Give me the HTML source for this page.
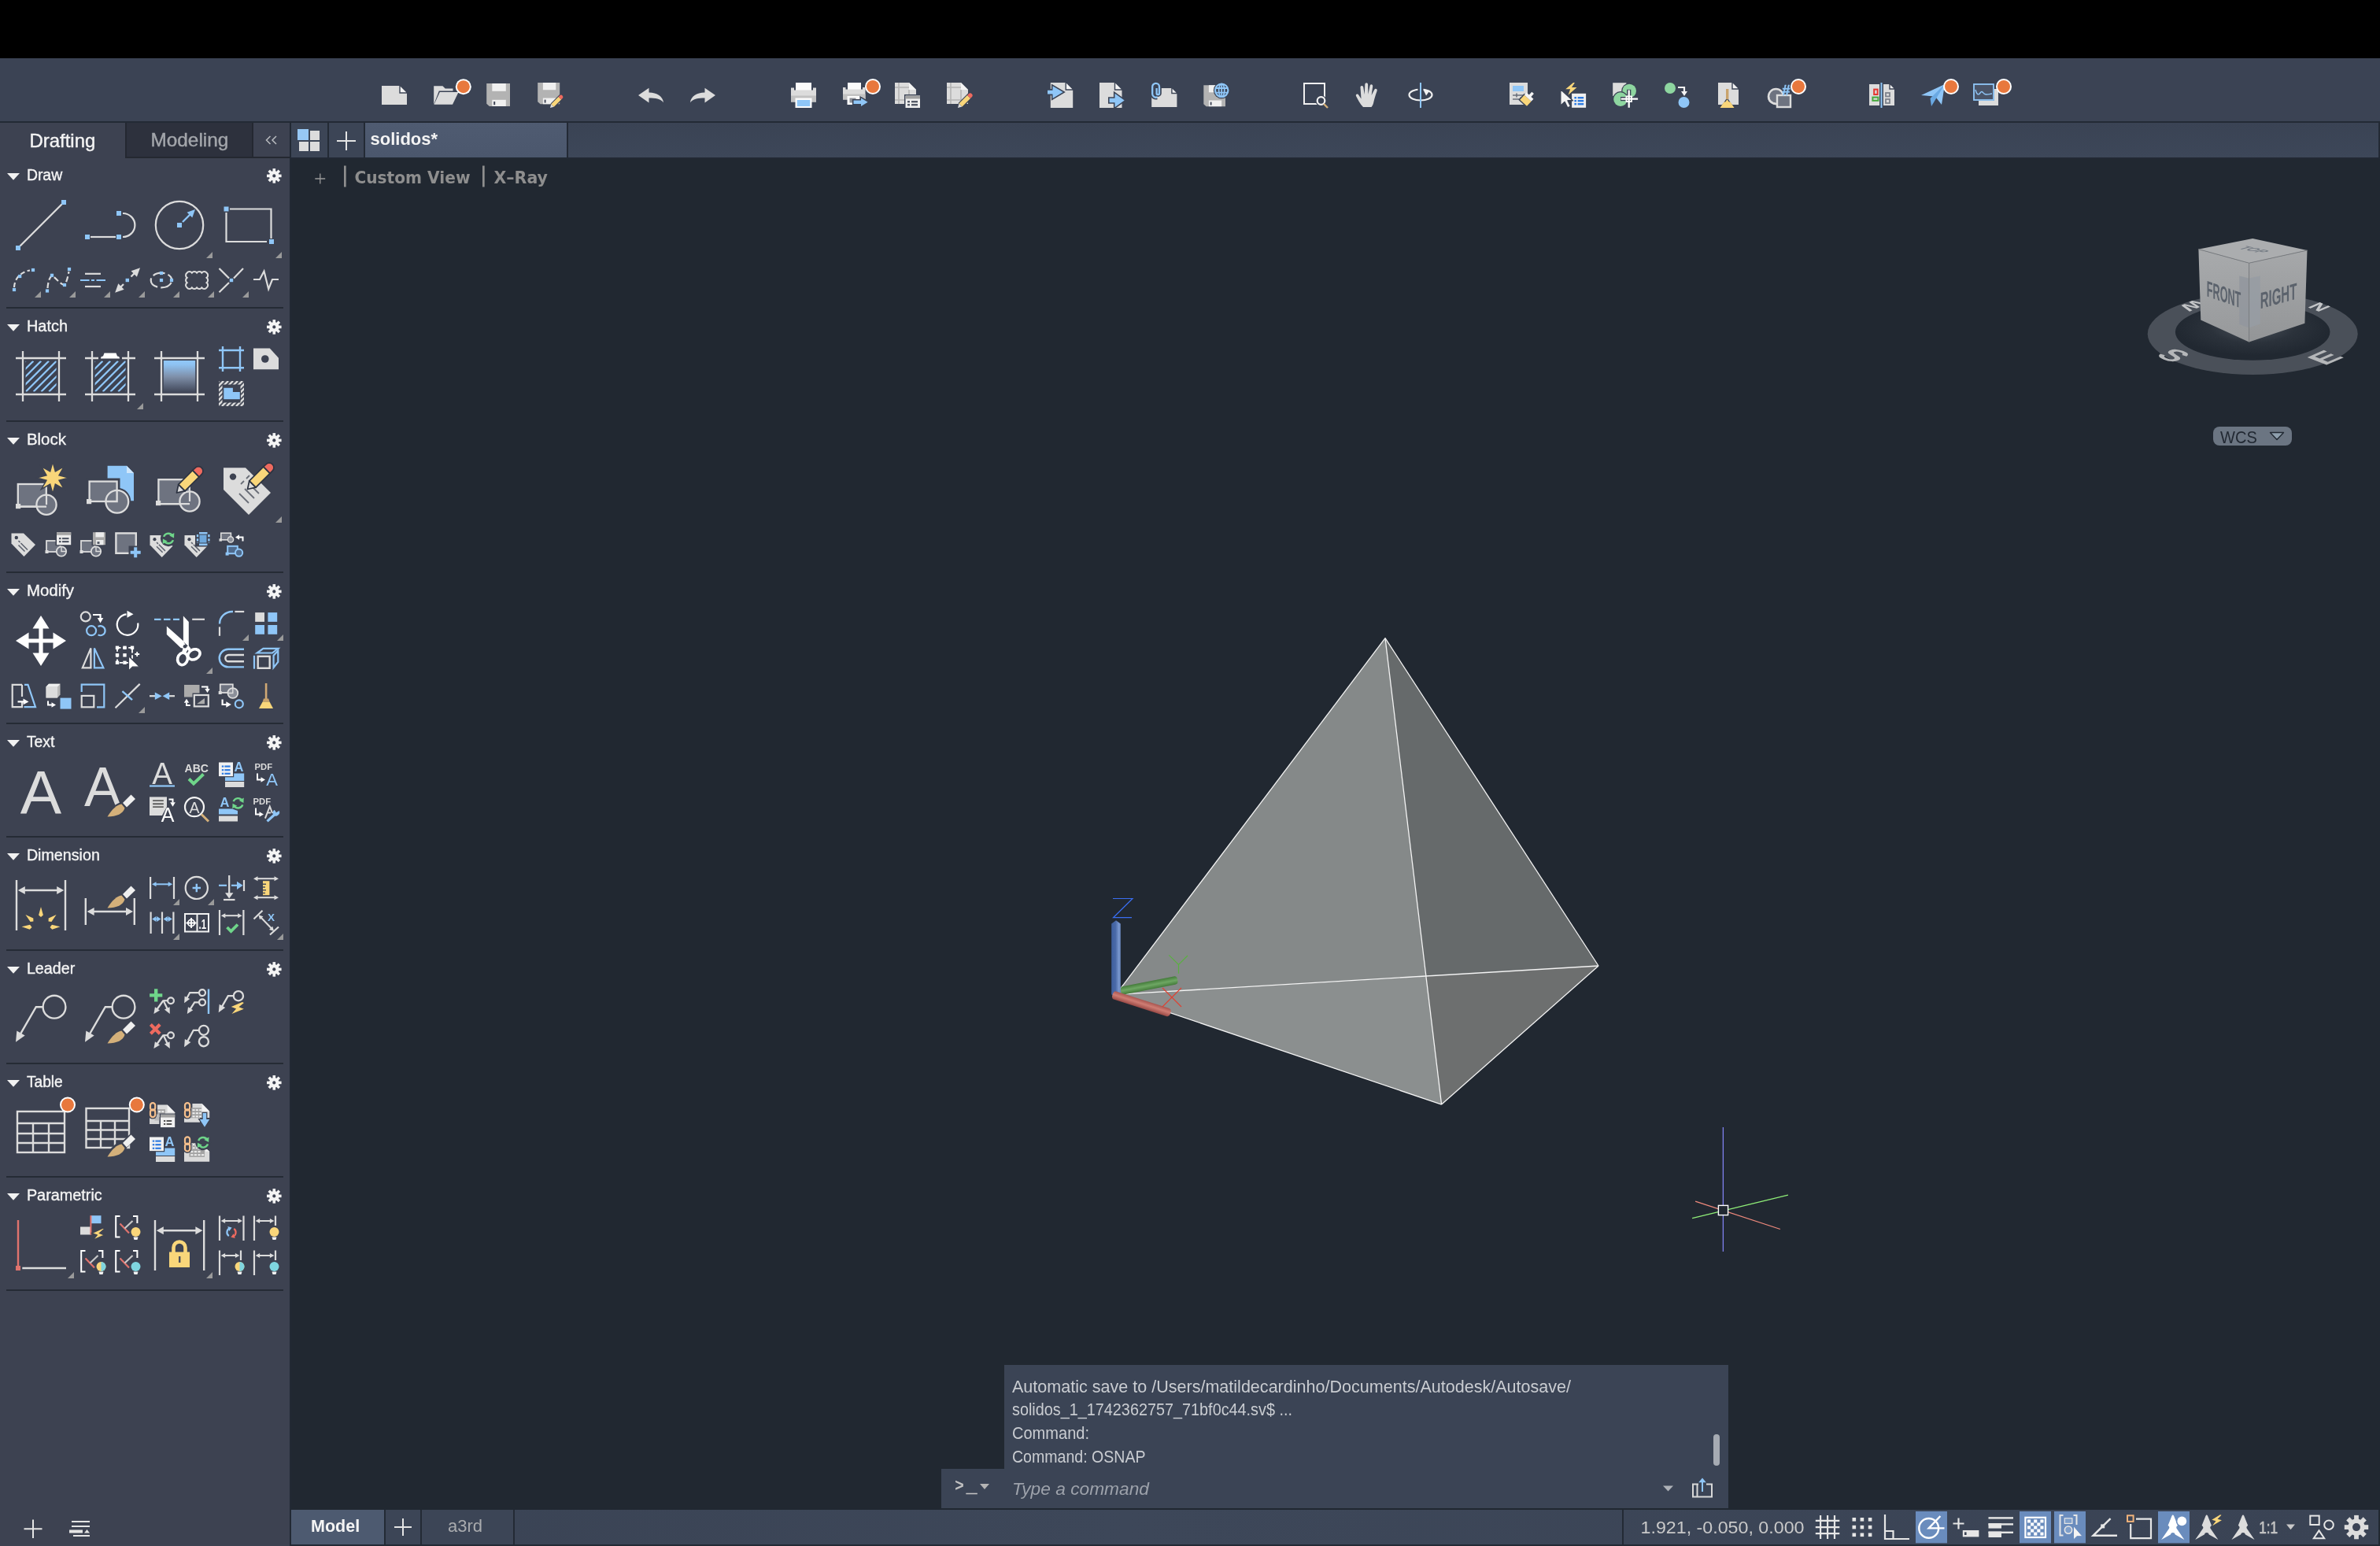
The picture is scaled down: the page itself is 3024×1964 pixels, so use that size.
<!DOCTYPE html><html lang="en"><head><meta charset="utf-8"><title>AutoCAD - solidos</title><style>
html,body{margin:0;padding:0;background:#212831;}
body{width:3024px;height:1964px;position:relative;overflow:hidden;font-family:"Liberation Sans",sans-serif;}
.abs{position:absolute;}
#menubar{left:0;top:0;width:3024px;height:74px;background:#000;}
#toolbar{left:0;top:74px;width:3024px;height:80px;background:#3b4354;}
#tbline{left:0;top:154px;width:3024px;height:2px;background:#232a35;}
#panel{left:0;top:156px;width:368px;height:1808px;background:#3d4251;}
#pedge{left:368px;top:156px;width:2px;height:1808px;background:#222934;}
#tabrow{left:370px;top:156px;width:2652px;height:44px;background:linear-gradient(#3a4354,#3d4759);}
#tabrow2{left:370px;top:200px;width:2654px;height:2px;background:#222934;}
.tbtn{top:156px;height:44px;background:#3c4556;}
#doctab{left:464px;top:156px;width:256px;height:44px;background:linear-gradient(#4f5b71,#4b576d);}
.vsep{top:156px;width:2px;height:44px;background:#232a35;}
#ptab2{left:159px;top:156px;width:162px;height:45px;background:#2d313d;border:solid #242831;border-width:0 1px 2px 2px;box-sizing:border-box;}
#pcol{left:321px;top:156px;width:47px;height:45px;background:#3d4251;border-bottom:2px solid #242831;border-left:1px solid #242831;box-sizing:border-box;}
#canvas{left:370px;top:202px;width:2654px;height:1716px;background:#212831;}
#botbar{left:370px;top:1918px;width:2652px;height:44px;background:linear-gradient(90deg,#3a4354,#3d4759 40%,#3a4354);}
#botline{left:370px;top:1962px;width:2654px;height:2px;background:#232a35;}
#mtab{left:370px;top:1918px;width:118px;height:44px;background:#4d5a70;}
#ptab{left:490px;top:1918px;width:44px;height:44px;background:#3c4556;}
#atab{left:536px;top:1918px;width:116px;height:44px;background:#3c4556;}
.bsep{top:1918px;width:2px;height:44px;background:#232a35;}
#cmdhist{left:1276px;top:1734px;width:920px;height:133px;background:#3b4455;}
#cmdin{left:1196px;top:1866px;width:1000px;height:50px;background:#3b4455;}
#cmdscroll{left:2177px;top:1822px;width:8px;height:40px;border-radius:4px;background:#a6abb3;}
svg{position:absolute;left:0;top:0;overflow:visible;will-change:transform;}
svg text{white-space:pre;}
</style></head><body>
<div id="menubar" class="abs"></div>
<div id="toolbar" class="abs"></div><div id="tbline" class="abs"></div>
<div id="canvas" class="abs"></div>
<div id="panel" class="abs"></div><div id="pedge" class="abs"></div>
<div id="ptab2" class="abs"></div><div id="pcol" class="abs"></div>
<div id="tabrow" class="abs"></div><div id="tabrow2" class="abs"></div>
<div class="abs tbtn" style="left:370px;width:46px"></div><div class="abs vsep" style="left:416px"></div>
<div class="abs tbtn" style="left:418px;width:44px"></div><div class="abs vsep" style="left:462px"></div>
<div id="doctab" class="abs"></div><div class="abs vsep" style="left:720px"></div>
<div class="abs" style="left:3022px;top:156px;width:2px;height:44px;background:#232a35"></div>
<div id="botbar" class="abs"></div><div id="botline" class="abs"></div>
<div id="mtab" class="abs"></div><div class="abs bsep" style="left:488px"></div>
<div id="ptab" class="abs"></div><div class="abs bsep" style="left:534px"></div>
<div id="atab" class="abs"></div><div class="abs bsep" style="left:652px"></div>
<div class="abs bsep" style="left:2061px"></div>
<div id="cmdhist" class="abs"></div><div id="cmdin" class="abs"></div><div id="cmdscroll" class="abs"></div>
<svg width="3024" height="1964" viewBox="0 0 3024 1964">
<polygon points="1760,810.7 1418,1263.4 1812.1,1240.4" fill="#858989"/>
<polygon points="1760,810.7 1812.1,1240.4 2031,1227" fill="#666a6b"/>
<polygon points="1418,1263.4 1831.6,1403.1 1812.1,1240.4" fill="#8b8f8f"/>
<polygon points="1812.1,1240.4 1831.6,1403.1 2031,1227" fill="#6d6f6f"/>
<path d="M1760 810.7L1418 1263.4" stroke="#f4f4f4" stroke-width="1.3" fill="none"/>
<path d="M1760 810.7L1831.6 1403.1" stroke="#f4f4f4" stroke-width="1.3" fill="none"/>
<path d="M1760 810.7L2031 1227" stroke="#f4f4f4" stroke-width="1.3" fill="none"/>
<path d="M1418 1263.4L1831.6 1403.1" stroke="#f4f4f4" stroke-width="1.3" fill="none"/>
<path d="M1831.6 1403.1L2031 1227" stroke="#f4f4f4" stroke-width="1.3" fill="none"/>
<path d="M1418 1263.4L2031 1227" stroke="#f4f4f4" stroke-width="1.3" fill="none"/>
<defs><linearGradient id="gz" x1="0" x2="1" y1="0" y2="0"><stop offset="0" stop-color="#3f5f9e"/><stop offset=".45" stop-color="#4a6aa8"/><stop offset=".8" stop-color="#7896cd"/><stop offset="1" stop-color="#6a88c0"/></linearGradient><linearGradient id="gy" x1="0" x2="0" y1="0" y2="1"><stop offset="0" stop-color="#437a3a"/><stop offset=".5" stop-color="#6ea763"/><stop offset="1" stop-color="#437a3a"/></linearGradient><linearGradient id="gx" x1="0" x2="0" y1="0" y2="1"><stop offset="0" stop-color="#a85650"/><stop offset=".45" stop-color="#cf7d74"/><stop offset="1" stop-color="#9a4a46"/></linearGradient></defs>
<path d="M1414 1141.5H1439L1414.5 1165.7H1438" stroke="#3a6ef0" stroke-width="1.2" fill="none"/>
<path d="M1412.2 1173.5L1418 1169.3L1423.8 1173.5V1262.5A5.8 3 0 0 1 1412.2 1262.5Z" fill="url(#gz)"/>
<g transform="translate(1424.2,1258.9) rotate(-11.07)"><rect x="0" y="-5.3" width="73.31" height="10.6" rx="4" fill="url(#gy)"/></g>
<g transform="translate(1414.6,1263.8) rotate(17.8)"><rect x="-1" y="-5.3" width="77.25" height="10.6" rx="4" fill="url(#gx)"/></g>
<path d="M1485.3 1213.4L1497.5 1225.5L1509 1214M1497.5 1225.5V1236.8" stroke="#5ab040" stroke-width="1.2" fill="none"/>
<path d="M1477 1255L1501 1279M1501 1255L1477 1279" stroke="#e04030" stroke-width="1.2" fill="none"/>
<path d="M2189.4 1432V1590" stroke="#8080f0" stroke-width="1.3"/>
<path d="M2150.1 1547.7L2271.9 1518.1" stroke="#8fee78" stroke-width="1.3"/>
<path d="M2154.1 1526.1L2261.9 1561.5" stroke="#f08a7c" stroke-width="1.3"/>
<rect x="2183.4" y="1531.4" width="12.2" height="12.2" fill="#212831" stroke="#fff" stroke-width="1.4"/>
<defs><linearGradient id="cf" x1="0" x2="0" y1="0" y2="1"><stop offset="0" stop-color="#a8aaac"/><stop offset="1" stop-color="#97999b"/></linearGradient><linearGradient id="cr" x1="0" x2="0" y1="0" y2="1"><stop offset="0" stop-color="#a6a8aa"/><stop offset="1" stop-color="#939597"/></linearGradient><radialGradient id="sh" cx=".5" cy=".42" r=".5"><stop offset="0" stop-color="#4b525b"/><stop offset=".55" stop-color="#2b323b"/><stop offset="1" stop-color="#212831"/></radialGradient></defs>
<ellipse cx="2862.2" cy="424.2" rx="133.5" ry="51.7" fill="#4a5059"/>
<ellipse cx="2862.2" cy="421.7" rx="98.3" ry="36" fill="url(#sh)"/>
<g transform="matrix(1.26,0.5,-1.21,0.52,2737.5,451.7)"><text x="0" y="0" font-family="'Liberation Sans',sans-serif" font-weight="700" font-size="29" fill="#b5b7b9">S</text></g>
<g transform="matrix(1.29,-0.56,1.18,0.47,2953.5,464.7)"><text x="0" y="0" font-family="'Liberation Sans',sans-serif" font-weight="700" font-size="30" fill="#b5b7b9">E</text></g>
<g transform="matrix(-0.76,-0.3,0.72,-0.31,2962.4,390)"><text x="0" y="0" font-family="'Liberation Sans',sans-serif" font-weight="700" font-size="30" fill="#c4c6c8">N</text></g>
<g transform="matrix(-0.78,0.34,-0.71,-0.28,2789.4,380.3)"><text x="0" y="0" font-family="'Liberation Sans',sans-serif" font-weight="700" font-size="30" fill="#c4c6c8">W</text></g>
<polygon points="2793.4,316.6 2862.2,303.1 2931.5,318 2857.6,334.2" fill="#abadaf"/>
<polygon points="2793.4,316.6 2857.6,334.2 2857.6,434.6 2796.3,406.6" fill="url(#cf)"/>
<polygon points="2857.6,334.2 2931.5,318 2928.4,410.8 2857.6,434.6" fill="url(#cr)"/>
<polygon points="2845.2,350.5 2857.6,353.5 2857.6,416.5 2845.2,412" fill="#92979e" opacity=".85"/>
<polygon points="2857.6,353.5 2871.8,350.5 2871.8,411.5 2857.6,416.5" fill="#979ca3" opacity=".85"/>
<path d="M2793.4 316.6L2857.6 334.2L2931.5 318M2857.6 334.2V434.6" stroke="#7b7e82" stroke-width="1" fill="none"/>
<g transform="matrix(1,0.35,0,1,2803.8,376.2)"><text x="0" y="0" font-family="'Liberation Sans',sans-serif" font-weight="700" font-size="28.5" fill="#5b626c" textLength="43.5" lengthAdjust="spacingAndGlyphs">FRONT</text></g>
<g transform="matrix(1,-0.27,0,1,2871.8,392.2)"><text x="0" y="0" font-family="'Liberation Sans',sans-serif" font-weight="700" font-size="29" fill="#5b626c" textLength="46.5" lengthAdjust="spacingAndGlyphs">RIGHT</text></g>
<g transform="matrix(0.95,0.2,-1.1,0.28,2843,315.5)"><text x="0" y="0" font-family="'Liberation Sans',sans-serif" font-weight="700" font-size="15.5" fill="#747b84">TOP</text></g>
<rect x="2812" y="542" width="100" height="24" rx="8" fill="#6b7582"/>
<text x="2821" y="563" font-family="'Liberation Sans',sans-serif" font-size="22.5" font-weight="400" fill="#222933" text-anchor="start" textLength="46.8" lengthAdjust="spacingAndGlyphs">WCS</text>
<path d="M2884.5 549.5H2901.5L2893 558.5Z" fill="#8fa0ae" stroke="#222933" stroke-width="1.4" stroke-linejoin="round"/>
<rect x="378" y="164" width="14" height="14" fill="#97c8f5" /><rect x="394" y="166" width="12" height="12" fill="#dcdcdc" /><rect x="380" y="180" width="12" height="12" fill="#dcdcdc" /><rect x="394" y="180" width="12" height="12" fill="#dcdcdc" />
<path d="M440 167V191M428 179H452" stroke="#e4e4e4" stroke-width="2"/>
<text x="470.5" y="183.6" font-family="'Liberation Sans',sans-serif" font-size="22" font-weight="700" fill="#f4f4f4" text-anchor="start" >solidos*</text>
<text x="37.5" y="187" font-family="'Liberation Sans',sans-serif" font-size="24" font-weight="400" fill="#f4f4f4" text-anchor="start" stroke="#f4f4f4" stroke-width="0.4" textLength="83.8" lengthAdjust="spacingAndGlyphs">Drafting</text>
<text x="191.5" y="186" font-family="'Liberation Sans',sans-serif" font-size="24" font-weight="400" fill="#a3a6ab" text-anchor="start" stroke="#a3a6ab" stroke-width="0.4" textLength="98.8" lengthAdjust="spacingAndGlyphs">Modeling</text>
<path d="M343.5 173L338.5 178L343.5 183M351 173L346 178L351 183" stroke="#b9bbbf" stroke-width="1.5" fill="none"/>
<path d="M406.8 220.6V233.5M400.3 227H413.2" stroke="#9a9a9a" stroke-width="1.3"/>
<rect x="437" y="210.5" width="2.7" height="27" fill="#8e8e8e" /><rect x="613" y="210.5" width="2.7" height="27" fill="#8e8e8e" />
<text x="450.5" y="233.2" font-family="'DejaVu Sans',sans-serif" font-size="20.4" font-weight="700" fill="#8e8e8e" text-anchor="start" textLength="147" lengthAdjust="spacingAndGlyphs">Custom View</text>
<text x="627.5" y="233.2" font-family="'DejaVu Sans',sans-serif" font-size="20.4" font-weight="700" fill="#8e8e8e" text-anchor="start" textLength="68.5" lengthAdjust="spacingAndGlyphs">X–Ray</text>
<text x="395" y="1946" font-family="'Liberation Sans',sans-serif" font-size="21.5" font-weight="700" fill="#f4f4f4" text-anchor="start" >Model</text>
<path d="M512 1929V1951M501 1940H523" stroke="#e4e4e4" stroke-width="2"/>
<text x="569" y="1946" font-family="'Liberation Sans',sans-serif" font-size="22" font-weight="400" fill="#a9abae" text-anchor="start" >a3rd</text>
<text x="1286" y="1768.5" font-family="'Liberation Sans',sans-serif" font-size="21.5" font-weight="400" fill="#c9ccd1" text-anchor="start" textLength="710" lengthAdjust="spacingAndGlyphs">Automatic save to /Users/matildecardinho/Documents/Autodesk/Autosave/</text>
<text x="1286" y="1798.3" font-family="'Liberation Sans',sans-serif" font-size="21.5" font-weight="400" fill="#c9ccd1" text-anchor="start" textLength="356" lengthAdjust="spacingAndGlyphs">solidos_1_1742362757_71bf0c44.sv$ ...</text>
<text x="1286" y="1828.2" font-family="'Liberation Sans',sans-serif" font-size="21.5" font-weight="400" fill="#c9ccd1" text-anchor="start" textLength="98" lengthAdjust="spacingAndGlyphs">Command:</text>
<text x="1286" y="1858" font-family="'Liberation Sans',sans-serif" font-size="21.5" font-weight="400" fill="#c9ccd1" text-anchor="start" textLength="169.5" lengthAdjust="spacingAndGlyphs">Command: OSNAP</text>
<text x="1286" y="1898.5" font-family="'Liberation Sans',sans-serif" font-size="22.5" font-weight="400" fill="#9da2ab" text-anchor="start" font-style="italic" textLength="174" lengthAdjust="spacingAndGlyphs">Type a command</text>
<text x="1213.2" y="1893.8" font-family="'Liberation Sans',sans-serif" font-size="22" font-weight="700" fill="#c2c2c2" text-anchor="start" textLength="11.4" lengthAdjust="spacingAndGlyphs">&gt;</text>
<text x="1227.9" y="1895.4" font-family="'Liberation Sans',sans-serif" font-size="22" font-weight="700" fill="#c2c2c2" text-anchor="start" stroke="#c2c2c2" stroke-width="0.7" textLength="13.2" lengthAdjust="spacingAndGlyphs">_</text>
<path d="M1245 1885H1257L1251 1892Z" fill="#b4b4b4"/>
<path d="M2113 1887.5H2126L2119.5 1894.5Z" fill="#aeb2b8"/>
<path d="M2158 1885.5H2151V1901.5H2175V1885.5H2168M2156.5 1885.5V1901.5" stroke="#d8d8d8" stroke-width="2" fill="none"/><path d="M2163 1895V1880" stroke="#8fc6f7" stroke-width="2"/><path d="M2158.2 1883.2L2163 1877.4L2167.8 1883.2Z" fill="#8fc6f7"/>
<g transform="translate(485,105)" ><path d="M0 4H23L32 13V28H0Z" fill="#dcdcdc" /><path d="M23 3V13H33Z" fill="#f4f4f4" stroke="#3b4354" stroke-width="1.4" stroke-linejoin="miter"/></g>
<g transform="translate(551,105)" ><path d="M0.2 27.7V4.2H11.4L14.7 7.5H24.5V10.4H6.8L0.2 27.7Z" fill="#dcdcdc" /><path d="M7.8 12H31.6L24 27.8H0.5Z" fill="#dcdcdc" /><circle cx="37.8" cy="5.2" r="10" fill="#fff"/><circle cx="37.8" cy="5.2" r="8" fill="#e8783d"/></g>
<g transform="translate(617,105)" ><g transform="translate(1.2,1) scale(1)"><path d="M0 0H29.8V29H3.6L0 25.8Z" fill="#b3b3b3" /><rect x="7.1" y="0" width="17.5" height="9.8" fill="#f0f0f0" /><rect x="7.1" y="20.8" width="17.5" height="8.2" fill="#f0f0f0" /><rect x="9" y="23" width="2" height="4.2" fill="#3f4556" /></g></g>
<g transform="translate(683,105)" ><g transform="translate(0.2,0) scale(0.94)"><path d="M0 0H29.8V29H3.6L0 25.8Z" fill="#b3b3b3" /><rect x="7.1" y="0" width="17.5" height="9.8" fill="#f0f0f0" /><rect x="7.1" y="20.8" width="17.5" height="8.2" fill="#f0f0f0" /><rect x="9" y="23" width="2" height="4.2" fill="#3f4556" /></g><g transform="translate(16,32) scale(0.44)"><path d="M-2 3L2 -13L26 -37A8 8 0 0 1 38 -26L13 -1Z" fill="#3b4354"/><path d="M0 0L3 -11L11 -3Z" fill="#dcdcdc"/><path d="M3 -11L24 -32L32 -24L11 -3Z" fill="#f9d67a"/><path d="M24 -32L27.5 -35.5A5.6 5.6 0 0 1 35.5 -27.5L32 -24Z" fill="#ee6a5f"/></g></g>
<g transform="translate(811,105)" ><path d="M0 16L13.5 6.8V12.6C24 12.6 31 17.5 32 25.2C28 20.6 22 19.6 13.5 19.6V25.4Z" fill="#dcdcdc" /></g>
<g transform="translate(877,105)" ><g transform="translate(32,0) scale(-1,1)"><path d="M0 16L13.5 6.8V12.6C24 12.6 31 17.5 32 25.2C28 20.6 22 19.6 13.5 19.6V25.4Z" fill="#dcdcdc" /></g></g>
<g transform="translate(1005,105)" ><rect x="6" y="0" width="20" height="10" fill="#fbfbfb" /><path d="M0 6.5H4V9.5H28V6.5H32V24.5H0Z" fill="#dcdcdc" /><rect x="0" y="16.5" width="32" height="8" fill="#c2c2c2" /><rect x="5.5" y="19.5" width="21" height="12.5" fill="#fbfbfb" /><rect x="7.8" y="22" width="16.4" height="8" fill="#8fc6f7" /></g>
<g transform="translate(1071,105)" ><rect x="6" y="0" width="17" height="9" fill="#fbfbfb" /><path d="M0 6H3.5V8.5H25V6H28.5V21.5H0Z" fill="#dcdcdc" /><rect x="0" y="14.5" width="28.5" height="7" fill="#c2c2c2" /><rect x="5.5" y="17" width="18" height="11" fill="#fbfbfb" /><rect x="8.5" y="19.5" width="8" height="6" fill="#8d9097" /><path d="M13.5 22.6H23V19.55L31.6 24.8L23 30.05V27H13.5Z" fill="#3b4354" stroke="#3b4354" stroke-width="3.2" stroke-linejoin="miter"/><path d="M13.5 22.6H23V19.55L31.6 24.8L23 30.05V27H13.5Z" fill="#8fc6f7" /><circle cx="38" cy="5" r="10" fill="#fff"/><circle cx="38" cy="5" r="8" fill="#e8783d"/></g>
<g transform="translate(1137,105)" ><path d="M0 0H18L27 9V27H0Z" fill="#dcdcdc" /><path d="M18 0V9H27Z" fill="#f4f4f4" /><path d="M5 0V27M18 9V27M0 6H18M0 22H27" stroke="#b4b4b4" stroke-width="1.6" fill="none" /><rect x="12" y="15" width="20" height="17" fill="#3b4354" /><rect x="13.5" y="16.5" width="18.5" height="15.5" fill="#f0f0f0" /><rect x="13.5" y="16.5" width="18.5" height="4" fill="#a0a0a0" /><rect x="16" y="23" width="3" height="2.4" fill="#555b68" /><rect x="21" y="23" width="8" height="2.4" fill="#555b68" /><rect x="16" y="27" width="3" height="2.4" fill="#555b68" /><rect x="21" y="27" width="8" height="2.4" fill="#555b68" /></g>
<g transform="translate(1203,105)" ><path d="M0 0H18L27 9V27H0Z" fill="#dcdcdc" /><path d="M18 0V9H27Z" fill="#f4f4f4" /><path d="M5 0V27M18 9V27M0 6H18M0 22H27" stroke="#b4b4b4" stroke-width="1.6" fill="none" /><g transform="translate(14,32) scale(0.5)"><path d="M-2 3L2 -13L26 -37A8 8 0 0 1 38 -26L13 -1Z" fill="#3b4354"/><path d="M0 0L3 -11L11 -3Z" fill="#dcdcdc"/><path d="M3 -11L24 -32L32 -24L11 -3Z" fill="#f9d67a"/><path d="M24 -32L27.5 -35.5A5.6 5.6 0 0 1 35.5 -27.5L32 -24Z" fill="#ee6a5f"/></g></g>
<g transform="translate(1331,105)" ><g transform="translate(3.8,0)" ><path d="M0 0H19.4L28.4 9V32H0Z" fill="#dcdcdc" /><path d="M19.4 -1V9H29.4Z" fill="#f4f4f4" stroke="#3b4354" stroke-width="1.4" stroke-linejoin="miter"/></g><path d="M0 9.65H6.5V4.2L19.7 12.1L6.5 20V14.55H0Z" fill="#3b4354" stroke="#3b4354" stroke-width="3.2" stroke-linejoin="miter"/><path d="M0 9.65H6.5V4.2L19.7 12.1L6.5 20V14.55H0Z" fill="#8fc6f7" /></g>
<g transform="translate(1397,105)" ><g transform="translate(0,0)" ><path d="M0 0H19.5L28.5 9V32H0Z" fill="#dcdcdc" /><path d="M19.5 -1V9H29.5Z" fill="#f4f4f4" stroke="#3b4354" stroke-width="1.4" stroke-linejoin="miter"/></g><path d="M12.6 19.8H19.5V13.75L31.7 22.5L19.5 31.25V25.2H12.6Z" fill="#3b4354" stroke="#3b4354" stroke-width="3.2" stroke-linejoin="miter"/><path d="M12.6 19.8H19.5V13.75L31.7 22.5L19.5 31.25V25.2H12.6Z" fill="#8fc6f7" /></g>
<g transform="translate(1463,105)" ><g transform="translate(0.2,7)" ><path d="M0 0H25.7L32.2 6.5V24H0Z" fill="#dcdcdc" /><path d="M25.7 -1V6.5H33.2Z" fill="#f4f4f4" stroke="#3b4354" stroke-width="1.4" stroke-linejoin="miter"/></g><path d="M6.8 6.5V13.5A1.6 1.6 0 0 0 10 13.5V5.2A4.4 4.4 0 0 0 1.2 5.2V14.5A4.6 4.6 0 0 0 7 18.6" stroke="#3b4354" stroke-width="5.6" fill="none" /><path d="M6.6 7V13.5A1.7 1.7 0 0 0 10 13.5V5.2A4.4 4.4 0 0 0 1.2 5.2V14.5A4.6 4.6 0 0 0 7.5 18.4" stroke="#8fc6f7" stroke-width="2.3" fill="none" /></g>
<g transform="translate(1529,105)" ><g transform="translate(0.3,3.2) scale(0.93)"><path d="M0 0H29.8V29H3.6L0 25.8Z" fill="#b3b3b3" /><rect x="7.1" y="0" width="17.5" height="9.8" fill="#f0f0f0" /><rect x="7.1" y="20.8" width="17.5" height="8.2" fill="#f0f0f0" /><rect x="9" y="23" width="2" height="4.2" fill="#3f4556" /></g><circle cx="23.2" cy="9.8" r="10.4" stroke="#3b4354" stroke-width="0" fill="#3b4354" /><circle cx="23.2" cy="9.8" r="8.2" stroke="#8fc6f7" stroke-width="2.2" fill="none" /><ellipse cx="23.2" cy="9.8" rx="3.6" ry="8.2" stroke="#8fc6f7" stroke-width="1.8" fill="none"/><path d="M15.5 7H31M15.5 12.6H31M23.2 1.6V18" stroke="#8fc6f7" stroke-width="1.8" fill="none" /></g>
<g transform="translate(1656,105)" ><rect x="1" y="1" width="26" height="26" stroke="#f0f0f0" stroke-width="2" fill="none" /><circle cx="22.5" cy="23" r="7" stroke="#3b4354" stroke-width="0" fill="#3b4354" /><circle cx="22.5" cy="23" r="4.8" stroke="#f4f4f4" stroke-width="2.2" fill="none" /><path d="M26 27L31 32" stroke="#d4b07a" stroke-width="2.4" fill="none" /></g>
<g transform="translate(1722,105)" ><path d="M10 31C6 27 3 21 1 17C0 14.5 3 13.5 4.5 16L7.5 20.5L6.5 6C6.3 3.5 9.8 3 10.2 5.8L11.8 15L12.3 2.5C12.4 -0.5 16 -0.5 16.1 2.5L16.4 14.8L18.6 4C19.2 1.2 22.6 1.8 22.2 4.8L20.6 16L24.2 9C25.5 6.6 28.5 8 27.6 10.6C25.5 16.5 24.5 20 23.5 24C23 27 22 29 20.5 31Z" fill="#dcdcdc" /></g>
<g transform="translate(1789,105)" ><ellipse cx="16" cy="15.5" rx="14.5" ry="7" stroke="#f0f0f0" stroke-width="2.2" fill="none"/><rect x="12.5" y="6" width="7" height="5" fill="#3b4354" /><path d="M16 0L16 32" stroke="#8fc6f7" stroke-width="2" fill="none" /><path d="M19.5 9.3L27.38 10.24L23.08 16.39Z" fill="#f0f0f0"/></g>
<g transform="translate(1918,105)" ><rect x="0" y="0" width="23" height="28" fill="#dcdcdc" /><rect x="4" y="4" width="14" height="7" fill="#8fc6f7" /><path d="M4 16H19M4 21H19M9 13.5V18.5M14 18.5V23.5" stroke="#6a707c" stroke-width="1.6" fill="none" /><g transform="translate(22.8,20.2) rotate(43)"><path d="M-7.4 -2H-3.6V-6.2H-3V-11.4H3V-6.2H3.6V-2H7.4V9H-7.4Z" fill="#3b4354"/><rect x="-6" y="-0.6" width="12" height="8.2" fill="#f9d67a" /><path d="M-6 -0.6H6V-4.8H1.8V-10H-1.8V-4.8H-6Z" fill="#f4f4f4" /></g></g>
<g transform="translate(1983,105)" ><path transform="translate(6.2,0) scale(1.3,0.98)" d="M7.5 0L0 8.5H4.6L2.5 16L11 6H6L9 0Z" fill="#f9d67a"/><rect x="13" y="12.6" width="20.4" height="20.4" fill="#3b4354" /><rect x="14.1" y="13.8" width="18" height="18" fill="#f0f0f0" /><rect x="17.4" y="18" width="2.6" height="2.4" fill="#2e7be0" /><rect x="21.6" y="18" width="7.6" height="2.4" fill="#2e7be0" /><rect x="17.4" y="22" width="2.6" height="2.4" fill="#2e7be0" /><rect x="21.6" y="22" width="7.6" height="2.4" fill="#2e7be0" /><rect x="17.4" y="26" width="2.6" height="2.4" fill="#2e7be0" /><rect x="21.6" y="26" width="7.6" height="2.4" fill="#2e7be0" /><path d="M-0.2 8.4V29.2L5 24.4L8.8 32L12.6 30.2L8.9 22.8H15.4Z" fill="#f4f4f4" stroke="#3b4354" stroke-width="1.4" stroke-linejoin="round"/></g>
<g transform="translate(2049,105)" ><rect x="0.2" y="0.2" width="17.2" height="16.8" fill="#dcdcdc" /><circle cx="21.2" cy="10.5" r="10" stroke="#3b4354" stroke-width="0" fill="#3b4354" /><circle cx="21.2" cy="10.5" r="8.8" stroke="#6fd58a" stroke-width="0" fill="#8ed6a0" /><circle cx="10" cy="21.1" r="10" stroke="#3b4354" stroke-width="0" fill="#3b4354" /><circle cx="10" cy="21.1" r="8.8" stroke="#6fd58a" stroke-width="0" fill="#8ed6a0" /><path d="M20.7 8.8V31.8M10 20.6H32.1" stroke="#3b4354" stroke-width="5.2" fill="none" /><path d="M20.7 9.6V31.8M10.6 20.6H32.1" stroke="#fff" stroke-width="2.3" fill="none" /><rect x="17.4" y="17.4" width="6.6" height="6.6" stroke="#fff" stroke-width="1.8" fill="none" /></g>
<g transform="translate(2115,105)" ><circle cx="7" cy="7" r="7" stroke="#6fd58a" stroke-width="0" fill="#8ed6a0" /><circle cx="24.5" cy="25" r="7" stroke="#8fc6f7" stroke-width="0" fill="#8fc6f7" /><path d="M17 6H25V12" stroke="#f4f4f4" stroke-width="2.2" fill="none" /><path d="M25 17L21 11L29 11Z" fill="#f4f4f4"/></g>
<g transform="translate(2182,105)" ><g transform="translate(1,0)" ><path d="M0 0H18L26 8V28H0Z" fill="#dcdcdc" /><path d="M18 -1V8H27Z" fill="#f4f4f4" stroke="#3b4354" stroke-width="1.4" stroke-linejoin="miter"/></g><path d="M12.5 9V20L7.5 27.5 3 32H22L17.5 27.5 12.5 20" fill="#f9d67a" stroke="#3b4354" stroke-width="1.3"/><rect x="11" y="8" width="3.4" height="13" fill="#c9a36c" /><path d="M3.5 32L8.5 24.5H16.5L21.5 32Z" fill="#f9d67a" /></g>
<g transform="translate(2246,105)" ><circle cx="10.5" cy="17.5" r="9.5" stroke="#dcdcdc" stroke-width="2.4" fill="#6e7380" /><rect x="12" y="16" width="17" height="15" stroke="#dcdcdc" stroke-width="2.4" fill="#6e7380" /><path d="M10.5 27A9.5 9.5 0 0 1 1 17.5" stroke="#dcdcdc" stroke-width="2.4" fill="none" /><text x="18.2" y="16.2" font-family="'Liberation Sans',sans-serif" font-size="18.5" font-weight="700" fill="#8fc6f7" text-anchor="start" stroke="#8fc6f7" stroke-width="0.5">#</text><circle cx="39" cy="5" r="10" fill="#fff"/><circle cx="39" cy="5" r="8" fill="#e8783d"/></g>
<g transform="translate(2375,105)" ><rect x="0" y="2" width="13" height="27" fill="#dcdcdc" /><g transform="translate(18,2)" ><path d="M0 0H8L14 6V27H0Z" fill="#dcdcdc" /><path d="M8 -1V6H15Z" fill="#f4f4f4" stroke="#3b4354" stroke-width="1.4" stroke-linejoin="miter"/></g><path d="M15.5 0L15.5 32" stroke="#8fc6f7" stroke-width="2" fill="none" /><rect x="6.2" y="8.6" width="4.4" height="6.4" stroke="#e5362f" stroke-width="2" fill="none" /><rect x="4.4" y="18.6" width="7" height="4.2" stroke="#45a93c" stroke-width="2" fill="none" /><rect x="21" y="13" width="5" height="4.5" stroke="#7d828c" stroke-width="1.8" fill="none" /><rect x="21" y="21" width="5" height="5" stroke="#7d828c" stroke-width="1.8" fill="none" /></g>
<g transform="translate(2441,105)" ><path d="M0 16L30 2L22 18Z" fill="#8fc6f7" /><path d="M30 2L26 28L19 19Z" fill="#8fc6f7" /><path d="M30 2L13 30L11.5 20Z" fill="#6aa9e3" /><circle cx="38" cy="5" r="10" fill="#fff"/><circle cx="38" cy="5" r="8" fill="#e8783d"/></g>
<g transform="translate(2507,105)" ><rect x="7" y="8" width="25" height="21" fill="#dcdcdc" /><rect x="0" y="1" width="27" height="22" fill="#4a5468" /><rect x="1" y="2" width="25" height="20" stroke="#8fc6f7" stroke-width="1.8" fill="none" /><path d="M3 9C5 16 7 16 9 13S12 12 14 14S18 15 24 14" stroke="#8fc6f7" stroke-width="1.4" fill="none" /><circle cx="39" cy="5" r="10" fill="#fff"/><circle cx="39" cy="5" r="8" fill="#e8783d"/></g>
<path d="M9 220.1H25L17 228.7Z" fill="#f2f2f2"/>
<text x="33.9" y="228.7" font-family="'Liberation Sans',sans-serif" font-size="19.6" font-weight="400" fill="#f4f4f4" text-anchor="start" stroke="#f4f4f4" stroke-width="0.35" textLength="45.3" lengthAdjust="spacingAndGlyphs">Draw</text>
<g transform="translate(348.3,223.4)" fill="#f4f4f4"><rect x="-1.8" y="-9.3" width="3.6" height="6" transform="rotate(0)"/><rect x="-1.8" y="-9.3" width="3.6" height="6" transform="rotate(45)"/><rect x="-1.8" y="-9.3" width="3.6" height="6" transform="rotate(90)"/><rect x="-1.8" y="-9.3" width="3.6" height="6" transform="rotate(135)"/><rect x="-1.8" y="-9.3" width="3.6" height="6" transform="rotate(180)"/><rect x="-1.8" y="-9.3" width="3.6" height="6" transform="rotate(225)"/><rect x="-1.8" y="-9.3" width="3.6" height="6" transform="rotate(270)"/><rect x="-1.8" y="-9.3" width="3.6" height="6" transform="rotate(315)"/><circle r="6.3"/><circle r="2.05" fill="#3d4251"/></g>
<rect x="8" y="390" width="352" height="2" fill="#252b35" />
<path d="M9 412.1H25L17 420.7Z" fill="#f2f2f2"/>
<text x="33.9" y="420.7" font-family="'Liberation Sans',sans-serif" font-size="19.6" font-weight="400" fill="#f4f4f4" text-anchor="start" stroke="#f4f4f4" stroke-width="0.35" textLength="52.1" lengthAdjust="spacingAndGlyphs">Hatch</text>
<g transform="translate(348.3,415.4)" fill="#f4f4f4"><rect x="-1.8" y="-9.3" width="3.6" height="6" transform="rotate(0)"/><rect x="-1.8" y="-9.3" width="3.6" height="6" transform="rotate(45)"/><rect x="-1.8" y="-9.3" width="3.6" height="6" transform="rotate(90)"/><rect x="-1.8" y="-9.3" width="3.6" height="6" transform="rotate(135)"/><rect x="-1.8" y="-9.3" width="3.6" height="6" transform="rotate(180)"/><rect x="-1.8" y="-9.3" width="3.6" height="6" transform="rotate(225)"/><rect x="-1.8" y="-9.3" width="3.6" height="6" transform="rotate(270)"/><rect x="-1.8" y="-9.3" width="3.6" height="6" transform="rotate(315)"/><circle r="6.3"/><circle r="2.05" fill="#3d4251"/></g>
<rect x="8" y="534" width="352" height="2" fill="#252b35" />
<path d="M9 556.1H25L17 564.7Z" fill="#f2f2f2"/>
<text x="33.9" y="564.7" font-family="'Liberation Sans',sans-serif" font-size="19.6" font-weight="400" fill="#f4f4f4" text-anchor="start" stroke="#f4f4f4" stroke-width="0.35" textLength="50.1" lengthAdjust="spacingAndGlyphs">Block</text>
<g transform="translate(348.3,559.4)" fill="#f4f4f4"><rect x="-1.8" y="-9.3" width="3.6" height="6" transform="rotate(0)"/><rect x="-1.8" y="-9.3" width="3.6" height="6" transform="rotate(45)"/><rect x="-1.8" y="-9.3" width="3.6" height="6" transform="rotate(90)"/><rect x="-1.8" y="-9.3" width="3.6" height="6" transform="rotate(135)"/><rect x="-1.8" y="-9.3" width="3.6" height="6" transform="rotate(180)"/><rect x="-1.8" y="-9.3" width="3.6" height="6" transform="rotate(225)"/><rect x="-1.8" y="-9.3" width="3.6" height="6" transform="rotate(270)"/><rect x="-1.8" y="-9.3" width="3.6" height="6" transform="rotate(315)"/><circle r="6.3"/><circle r="2.05" fill="#3d4251"/></g>
<rect x="8" y="726" width="352" height="2" fill="#252b35" />
<path d="M9 748.1H25L17 756.7Z" fill="#f2f2f2"/>
<text x="33.9" y="756.7" font-family="'Liberation Sans',sans-serif" font-size="19.6" font-weight="400" fill="#f4f4f4" text-anchor="start" stroke="#f4f4f4" stroke-width="0.35" textLength="60.2" lengthAdjust="spacingAndGlyphs">Modify</text>
<g transform="translate(348.3,751.4)" fill="#f4f4f4"><rect x="-1.8" y="-9.3" width="3.6" height="6" transform="rotate(0)"/><rect x="-1.8" y="-9.3" width="3.6" height="6" transform="rotate(45)"/><rect x="-1.8" y="-9.3" width="3.6" height="6" transform="rotate(90)"/><rect x="-1.8" y="-9.3" width="3.6" height="6" transform="rotate(135)"/><rect x="-1.8" y="-9.3" width="3.6" height="6" transform="rotate(180)"/><rect x="-1.8" y="-9.3" width="3.6" height="6" transform="rotate(225)"/><rect x="-1.8" y="-9.3" width="3.6" height="6" transform="rotate(270)"/><rect x="-1.8" y="-9.3" width="3.6" height="6" transform="rotate(315)"/><circle r="6.3"/><circle r="2.05" fill="#3d4251"/></g>
<rect x="8" y="918" width="352" height="2" fill="#252b35" />
<path d="M9 940.1H25L17 948.7Z" fill="#f2f2f2"/>
<text x="33.9" y="948.7" font-family="'Liberation Sans',sans-serif" font-size="19.6" font-weight="400" fill="#f4f4f4" text-anchor="start" stroke="#f4f4f4" stroke-width="0.35" textLength="35.4" lengthAdjust="spacingAndGlyphs">Text</text>
<g transform="translate(348.3,943.4)" fill="#f4f4f4"><rect x="-1.8" y="-9.3" width="3.6" height="6" transform="rotate(0)"/><rect x="-1.8" y="-9.3" width="3.6" height="6" transform="rotate(45)"/><rect x="-1.8" y="-9.3" width="3.6" height="6" transform="rotate(90)"/><rect x="-1.8" y="-9.3" width="3.6" height="6" transform="rotate(135)"/><rect x="-1.8" y="-9.3" width="3.6" height="6" transform="rotate(180)"/><rect x="-1.8" y="-9.3" width="3.6" height="6" transform="rotate(225)"/><rect x="-1.8" y="-9.3" width="3.6" height="6" transform="rotate(270)"/><rect x="-1.8" y="-9.3" width="3.6" height="6" transform="rotate(315)"/><circle r="6.3"/><circle r="2.05" fill="#3d4251"/></g>
<rect x="8" y="1062" width="352" height="2" fill="#252b35" />
<path d="M9 1084.1H25L17 1092.7Z" fill="#f2f2f2"/>
<text x="33.9" y="1092.7" font-family="'Liberation Sans',sans-serif" font-size="19.6" font-weight="400" fill="#f4f4f4" text-anchor="start" stroke="#f4f4f4" stroke-width="0.35" textLength="93" lengthAdjust="spacingAndGlyphs">Dimension</text>
<g transform="translate(348.3,1087.4)" fill="#f4f4f4"><rect x="-1.8" y="-9.3" width="3.6" height="6" transform="rotate(0)"/><rect x="-1.8" y="-9.3" width="3.6" height="6" transform="rotate(45)"/><rect x="-1.8" y="-9.3" width="3.6" height="6" transform="rotate(90)"/><rect x="-1.8" y="-9.3" width="3.6" height="6" transform="rotate(135)"/><rect x="-1.8" y="-9.3" width="3.6" height="6" transform="rotate(180)"/><rect x="-1.8" y="-9.3" width="3.6" height="6" transform="rotate(225)"/><rect x="-1.8" y="-9.3" width="3.6" height="6" transform="rotate(270)"/><rect x="-1.8" y="-9.3" width="3.6" height="6" transform="rotate(315)"/><circle r="6.3"/><circle r="2.05" fill="#3d4251"/></g>
<rect x="8" y="1206" width="352" height="2" fill="#252b35" />
<path d="M9 1228.1H25L17 1236.7Z" fill="#f2f2f2"/>
<text x="33.9" y="1236.7" font-family="'Liberation Sans',sans-serif" font-size="19.6" font-weight="400" fill="#f4f4f4" text-anchor="start" stroke="#f4f4f4" stroke-width="0.35" textLength="61.3" lengthAdjust="spacingAndGlyphs">Leader</text>
<g transform="translate(348.3,1231.4)" fill="#f4f4f4"><rect x="-1.8" y="-9.3" width="3.6" height="6" transform="rotate(0)"/><rect x="-1.8" y="-9.3" width="3.6" height="6" transform="rotate(45)"/><rect x="-1.8" y="-9.3" width="3.6" height="6" transform="rotate(90)"/><rect x="-1.8" y="-9.3" width="3.6" height="6" transform="rotate(135)"/><rect x="-1.8" y="-9.3" width="3.6" height="6" transform="rotate(180)"/><rect x="-1.8" y="-9.3" width="3.6" height="6" transform="rotate(225)"/><rect x="-1.8" y="-9.3" width="3.6" height="6" transform="rotate(270)"/><rect x="-1.8" y="-9.3" width="3.6" height="6" transform="rotate(315)"/><circle r="6.3"/><circle r="2.05" fill="#3d4251"/></g>
<rect x="8" y="1350" width="352" height="2" fill="#252b35" />
<path d="M9 1372.1H25L17 1380.7Z" fill="#f2f2f2"/>
<text x="33.9" y="1380.7" font-family="'Liberation Sans',sans-serif" font-size="19.6" font-weight="400" fill="#f4f4f4" text-anchor="start" stroke="#f4f4f4" stroke-width="0.35" textLength="45.9" lengthAdjust="spacingAndGlyphs">Table</text>
<g transform="translate(348.3,1375.4)" fill="#f4f4f4"><rect x="-1.8" y="-9.3" width="3.6" height="6" transform="rotate(0)"/><rect x="-1.8" y="-9.3" width="3.6" height="6" transform="rotate(45)"/><rect x="-1.8" y="-9.3" width="3.6" height="6" transform="rotate(90)"/><rect x="-1.8" y="-9.3" width="3.6" height="6" transform="rotate(135)"/><rect x="-1.8" y="-9.3" width="3.6" height="6" transform="rotate(180)"/><rect x="-1.8" y="-9.3" width="3.6" height="6" transform="rotate(225)"/><rect x="-1.8" y="-9.3" width="3.6" height="6" transform="rotate(270)"/><rect x="-1.8" y="-9.3" width="3.6" height="6" transform="rotate(315)"/><circle r="6.3"/><circle r="2.05" fill="#3d4251"/></g>
<rect x="8" y="1494" width="352" height="2" fill="#252b35" />
<path d="M9 1516.1H25L17 1524.7Z" fill="#f2f2f2"/>
<text x="33.9" y="1524.7" font-family="'Liberation Sans',sans-serif" font-size="19.6" font-weight="400" fill="#f4f4f4" text-anchor="start" stroke="#f4f4f4" stroke-width="0.35" textLength="95.9" lengthAdjust="spacingAndGlyphs">Parametric</text>
<g transform="translate(348.3,1519.4)" fill="#f4f4f4"><rect x="-1.8" y="-9.3" width="3.6" height="6" transform="rotate(0)"/><rect x="-1.8" y="-9.3" width="3.6" height="6" transform="rotate(45)"/><rect x="-1.8" y="-9.3" width="3.6" height="6" transform="rotate(90)"/><rect x="-1.8" y="-9.3" width="3.6" height="6" transform="rotate(135)"/><rect x="-1.8" y="-9.3" width="3.6" height="6" transform="rotate(180)"/><rect x="-1.8" y="-9.3" width="3.6" height="6" transform="rotate(225)"/><rect x="-1.8" y="-9.3" width="3.6" height="6" transform="rotate(270)"/><rect x="-1.8" y="-9.3" width="3.6" height="6" transform="rotate(315)"/><circle r="6.3"/><circle r="2.05" fill="#3d4251"/></g>
<rect x="8" y="1638" width="352" height="2" fill="#252b35" />
<g transform="translate(20,254)" ><path d="M5.5 58.5L58.5 5.5" stroke="#dcdcdc" stroke-width="2.3" fill="none" /><rect x="0" y="58" width="6" height="6" fill="#8fc6f7"/><rect x="58" y="0" width="6" height="6" fill="#8fc6f7"/></g>
<g transform="translate(108,254)" ><path d="M7 47L39 47" stroke="#dcdcdc" stroke-width="2.2" fill="none" /><path d="M48 17A15.4 15 0 0 1 48 47" stroke="#dcdcdc" stroke-width="2.2" fill="none" /><rect x="0" y="44" width="6" height="6" fill="#8fc6f7"/><rect x="40" y="44" width="6" height="6" fill="#8fc6f7"/><rect x="40" y="14" width="6" height="6" fill="#8fc6f7"/></g>
<g transform="translate(196,254)" ><circle cx="32" cy="32" r="30.2" stroke="#dcdcdc" stroke-width="2.2" fill="none" /><path d="M36 28L46 18" stroke="#8fc6f7" stroke-width="2.4" fill="none" /><path d="M52 12L48.29 22.43L41.57 15.71Z" fill="#8fc6f7"/><rect x="29" y="29" width="6" height="6" fill="#8fc6f7"/><path d="M74 66V74H66Z" fill="#9a9a9a"/></g>
<g transform="translate(284,254)" ><path d="M8 11.5H60.5V49M55 53H3.5V16" stroke="#dcdcdc" stroke-width="2.2" fill="none" /><rect x="0.5" y="8.5" width="6" height="6" fill="#8fc6f7"/><rect x="58" y="50" width="6" height="6" fill="#8fc6f7"/><path d="M74 66V74H66Z" fill="#9a9a9a"/></g>
<g transform="translate(14,340)" ><path d="M4 25C4.5 14 12 5.5 24 3.5" stroke="#dcdcdc" stroke-width="2.2" fill="none" stroke-dasharray="6 3.5"/><rect x="1.9" y="25.9" width="4.2" height="4.2" fill="#8fc6f7"/><rect x="9.1" y="8.9" width="4.2" height="4.2" fill="#8fc6f7"/><rect x="25.9" y="0.9" width="4.2" height="4.2" fill="#8fc6f7"/><path d="M38 30V38H30Z" fill="#9a9a9a"/></g>
<g transform="translate(58,340)" ><path d="M2.5 26C3 18 5 12 8 10C12 12 18 21 24 22C27 18 28.5 10 29.5 5" stroke="#dcdcdc" stroke-width="2.2" fill="none" stroke-dasharray="7 3.5"/><rect x="-0.1" y="27.4" width="4.2" height="4.2" fill="#8fc6f7"/><rect x="5.9" y="7.7" width="4.2" height="4.2" fill="#8fc6f7"/><rect x="21.9" y="19.9" width="4.2" height="4.2" fill="#8fc6f7"/><rect x="27.9" y="-0.1" width="4.2" height="4.2" fill="#8fc6f7"/><path d="M38 30V38H30Z" fill="#9a9a9a"/></g>
<g transform="translate(102,340)" ><path d="M6 7.8L26 7.8" stroke="#dcdcdc" stroke-width="2.2" fill="none" /><path d="M6 24L26 24" stroke="#dcdcdc" stroke-width="2.2" fill="none" /><path d="M0 16H11.5M14 16H18M20.5 16H32" stroke="#8fc6f7" stroke-width="2.2" fill="none" /><path d="M38 30V38H30Z" fill="#9a9a9a"/></g>
<g transform="translate(146,340)" ><path d="M5 27L11 21M20.5 11.5L27 5" stroke="#dcdcdc" stroke-width="2.4" fill="none" /><path d="M0.2 31.8L4.3 20.34L11.66 27.7Z" fill="#dcdcdc"/><path d="M32 0.2L27.9 11.66L20.54 4.3Z" fill="#dcdcdc"/><rect x="13.6" y="13.8" width="4.4" height="4.4" fill="#8fc6f7"/><path d="M38 30V38H30Z" fill="#9a9a9a"/></g>
<g transform="translate(190,340)" ><ellipse cx="15" cy="16" rx="13.3" ry="9.3" stroke="#dcdcdc" stroke-width="2.2" fill="none" stroke-dasharray="15.5 4.2" stroke-dashoffset="-3"/><rect x="12.9" y="4.9" width="4.2" height="4.2" fill="#8fc6f7"/><rect x="12.9" y="13.9" width="4.2" height="4.2" fill="#8fc6f7"/><rect x="25.9" y="13.9" width="4.2" height="4.2" fill="#8fc6f7"/><path d="M38 30V38H30Z" fill="#9a9a9a"/></g>
<g transform="translate(234,340)" ><path d="M3.6 6.6a3.9 3.9 0 0 1 6.25 0a3.9 3.9 0 0 1 6.25 0a3.9 3.9 0 0 1 6.25 0a3.9 3.9 0 0 1 6.25 0a3.9 3.9 0 0 1 0 6.27a3.9 3.9 0 0 1 0 6.27a3.9 3.9 0 0 1 0 6.27a3.9 3.9 0 0 1 -6.25 0a3.9 3.9 0 0 1 -6.25 0a3.9 3.9 0 0 1 -6.25 0a3.9 3.9 0 0 1 -6.25 0a3.9 3.9 0 0 1 0 -6.27a3.9 3.9 0 0 1 0 -6.27a3.9 3.9 0 0 1 0 -6.27Z" stroke="#dcdcdc" stroke-width="2" fill="none" /><path d="M38 30V38H30Z" fill="#9a9a9a"/></g>
<g transform="translate(278,340)" ><path d="M0.5 1L13 13.5M31 1L19 13.5M0.5 31.3L13 19" stroke="#dcdcdc" stroke-width="2.2" fill="none" /><rect x="13.8" y="13.8" width="4.4" height="4.4" fill="#8fc6f7"/><path d="M38 30V38H30Z" fill="#9a9a9a"/></g>
<g transform="translate(322,340)" ><path d="M0 15H8L13.5 4.5L19.2 27.2L24 15H32" stroke="#dcdcdc" stroke-width="2.2" fill="none" stroke-linejoin="miter"/></g>
<g transform="translate(20,446)" ><clipPath id="h1"><rect x="12.6" y="12.6" width="39" height="39"/></clipPath><g clip-path="url(#h1)"><path d="M-26.4 51.6L12.6 12.6M-16.6 51.6L22.4 12.6M-6.8 51.6L32.2 12.6M3 51.6L42 12.6M12.8 51.6L51.8 12.6M22.6 51.6L61.6 12.6M32.4 51.6L71.4 12.6M42.2 51.6L81.2 12.6M52 51.6L91 12.6" stroke="#8fc6f7" stroke-width="2.2" fill="none" /></g><path d="M9 0V64M55 0V64M0 9H64M0 55H64" stroke="#dcdcdc" stroke-width="2.3" fill="none" /></g>
<g transform="translate(108,446)" ><clipPath id="h2"><rect x="12.6" y="12.6" width="39" height="39"/></clipPath><g clip-path="url(#h2)"><path d="M-26.4 51.6L12.6 12.6M-16.6 51.6L22.4 12.6M-6.8 51.6L32.2 12.6M3 51.6L42 12.6M12.8 51.6L51.8 12.6M22.6 51.6L61.6 12.6M32.4 51.6L71.4 12.6M42.2 51.6L81.2 12.6M52 51.6L91 12.6" stroke="#8fc6f7" stroke-width="2.2" fill="none" /></g><path d="M9 0V64M55 0V64M0 9H64M0 55H64" stroke="#dcdcdc" stroke-width="2.3" fill="none" /><rect x="17" y="6" width="30" height="5" fill="#3d4251" /><path d="M20 9.6Q20 6.8 23 6.6L24.5 2.6H39.5L41 6.6Q44 6.8 44 9.6Z" fill="#fff" /><path d="M74 66V74H66Z" fill="#9a9a9a"/></g>
<g transform="translate(196,446)" ><defs><linearGradient id="hg" x1="0" x2="0" y1="0" y2="1"><stop offset="0" stop-color="#90c7f8"/><stop offset=".12" stop-color="#8fc3f3"/><stop offset=".5" stop-color="#7f90aa"/><stop offset="1" stop-color="#3e4455"/></linearGradient></defs><rect x="11.8" y="12" width="40.4" height="41" fill="url(#hg)" /><path d="M9 0V64M55 0V64M0 9H64M0 55H64" stroke="#dcdcdc" stroke-width="2.3" fill="none" /></g>
<g transform="translate(278,440)" ><path d="M5 0V32M27 0V32M0 5H32M0 27.3H32" stroke="#8fc6f7" stroke-width="2.4" fill="none" /></g>
<g transform="translate(322,440)" ><path d="M0 2.6H20.8L32 14.7V29.2H0Z" fill="#dcdcdc" /><circle cx="14.8" cy="16" r="4.8" fill="#3d4251"/></g>
<g transform="translate(278,484)" ><clipPath id="hb"><path d="M0 0H32V32H0ZM4.5 4.5V27.5H27.5V4.5Z" clip-rule="evenodd"/></clipPath><g clip-path="url(#hb)"><rect x="0" y="0" width="32" height="32" fill="#4a4f5c" /><path d="M-32 32L0 0M-26 32L6 0M-20 32L12 0M-14 32L18 0M-8 32L24 0M-2 32L30 0M4 32L36 0M10 32L42 0M16 32L48 0M22 32L54 0M28 32L60 0M34 32L66 0" stroke="#dcdcdc" stroke-width="2.4" fill="none" /></g><path d="M5.7 8.1H18.5V13.3H27.4V23.8H5.7Z" fill="#8fc6f7" /><path d="M5.7 8.1H18.5V13.3H27.4V23.8H5.7Z" stroke="#3d4251" stroke-width="1.2" fill="none" /></g>
<g transform="translate(20,590)" ><rect x="2.8" y="25" width="36" height="28.6" stroke="#dcdcdc" stroke-width="2.3" fill="#6e7380" /><circle cx="39" cy="51.2" r="12.6" stroke="#dcdcdc" stroke-width="2.3" fill="#6e7380" /><path d="M39 38.6V51.2" stroke="#dcdcdc" stroke-width="2.2" fill="none" /><path d="M2.8 53.6H39" stroke="#dcdcdc" stroke-width="2.3" fill="none" /><rect x="0" y="50" width="6.2" height="6.2" fill="#dcdcdc" /><path d="M47 -3.4L50.37 8.87L61.42 2.58L55.13 13.63L67.4 17L55.13 20.37L61.42 31.42L50.37 25.13L47 37.4L43.63 25.13L32.58 31.42L38.87 20.37L26.6 17L38.87 13.63L32.58 2.58L43.63 8.87Z" fill="#f9d67a" stroke="#3d4251" stroke-width="1.6" stroke-linejoin="miter"/></g>
<g transform="translate(108,590)" ><path d="M28.6 1.8H53L62 11V46.3H28.6Z" fill="#8fc6f7" /><path d="M53 1.8V11H62Z" fill="#cfe6fb" /><rect x="1.5" y="17.5" width="43" height="33" fill="#3d4251" /><circle cx="40.8" cy="47.2" r="17.5" stroke="#3d4251" stroke-width="0" fill="#3d4251" /><rect x="5.6" y="21.6" width="35" height="25.4" stroke="#dcdcdc" stroke-width="2.3" fill="#6e7380" /><circle cx="40.8" cy="47.2" r="14.4" stroke="#dcdcdc" stroke-width="2.3" fill="#6e7380" /><path d="M40.6 32.8V47H26.4" stroke="#dcdcdc" stroke-width="2.4" fill="none" /><rect x="2" y="44" width="6.2" height="6.2" fill="#dcdcdc" /></g>
<g transform="translate(196,590)" ><rect x="5.4" y="19.2" width="39.4" height="31" stroke="#dcdcdc" stroke-width="2.3" fill="#6e7380" /><circle cx="45" cy="47" r="12.6" stroke="#dcdcdc" stroke-width="2.3" fill="#6e7380" /><path d="M45 34.4V47" stroke="#dcdcdc" stroke-width="2.2" fill="none" /><path d="M5.4 50.2H45" stroke="#dcdcdc" stroke-width="2.3" fill="none" /><rect x="2" y="46" width="6.2" height="6.2" fill="#dcdcdc" /><g transform="translate(28.5,36) scale(0.92) rotate(0)"><path d="M0 0L2.5 -11.5L11.5 -2.5Z" fill="#dcdcdc" stroke="#2d3341" stroke-width="1.9" stroke-linejoin="round"/><path d="M2.5 -11.5L22 -31L31 -22L11.5 -2.5Z" fill="#f9d67a" stroke="#2d3341" stroke-width="1.9"/><path d="M22 -31L25.5 -34.5A6.36 6.36 0 0 1 34.5 -25.5L31 -22Z" fill="#ee6a5f" stroke="#2d3341" stroke-width="1.9"/></g></g>
<g transform="translate(284,590)" ><path d="M0 4.3H28L60 36L32 64L0 32Z" fill="#dcdcdc" /><circle cx="12" cy="15.6" r="4.2" fill="#3d4251"/><path d="M22 25L26 21M29 18L33 14M20 37L32 49M27 31L39 43M33 25L45 37" stroke="#6a6e78" stroke-width="1.8" fill="none" /><g transform="translate(30.5,31.5) scale(0.92) rotate(0)"><path d="M0 0L2.5 -11.5L11.5 -2.5Z" fill="#dcdcdc" stroke="#2d3341" stroke-width="1.9" stroke-linejoin="round"/><path d="M2.5 -11.5L22 -31L31 -22L11.5 -2.5Z" fill="#f9d67a" stroke="#2d3341" stroke-width="1.9"/><path d="M22 -31L25.5 -34.5A6.36 6.36 0 0 1 34.5 -25.5L31 -22Z" fill="#ee6a5f" stroke="#2d3341" stroke-width="1.9"/></g><path d="M74 66V74H66Z" fill="#9a9a9a"/></g>
<g transform="translate(14,676)" ><path d="M0.5 1.5H16L31 16L16.5 31L0.5 14.5Z" fill="#dcdcdc" /><circle cx="6.8" cy="7" r="2.2" fill="#3d4251"/><path d="M9.5 11L11.5 13M12.5 14L21 22.5M9.5 16.5L17.5 24.5" stroke="#5c616d" stroke-width="1.6" fill="none" /></g>
<g transform="translate(58,676)" ><rect x="1" y="11" width="17.5" height="14" stroke="#dcdcdc" stroke-width="1.8" fill="#6e7380" /><circle cx="20" cy="24.5" r="6.2" stroke="#dcdcdc" stroke-width="1.8" fill="#6e7380" /><path d="M20 18.3V24.5H26.2" stroke="#dcdcdc" stroke-width="1.4" fill="none" /><rect x="-0.5" y="23" width="4" height="4" fill="#dcdcdc" /><rect x="12.5" y="-1.3" width="21" height="18.5" fill="#3d4251" /><rect x="14" y="0.2" width="18.2" height="16" fill="#ececec" /><rect x="14" y="0.2" width="18.2" height="3.6" fill="#a4a4a4" /><rect x="17" y="7" width="2.6" height="2.2" fill="#555b68" /><rect x="21" y="7" width="8.5" height="2.2" fill="#555b68" /><rect x="17" y="11" width="2.6" height="2.2" fill="#555b68" /><rect x="21" y="11" width="8.5" height="2.2" fill="#555b68" /></g>
<g transform="translate(102,676)" ><rect x="1" y="11" width="17.5" height="14" stroke="#dcdcdc" stroke-width="1.8" fill="#6e7380" /><circle cx="20" cy="24.5" r="6.2" stroke="#dcdcdc" stroke-width="1.8" fill="#6e7380" /><path d="M20 18.3V24.5H26.2" stroke="#dcdcdc" stroke-width="1.4" fill="none" /><rect x="-0.5" y="23" width="4" height="4" fill="#dcdcdc" /><rect x="14.5" y="-1.3" width="19" height="18.5" fill="#3d4251" /><rect x="16" y="0.2" width="16" height="16" fill="#a9a9a9" /><rect x="19.5" y="0.2" width="10.5" height="6.2" fill="#ececec" /><rect x="20" y="10" width="9.5" height="6.2" fill="#ececec" /><rect x="21.5" y="12" width="3" height="3" fill="#555b68" /></g>
<g transform="translate(146,676)" ><rect x="1.4" y="1.4" width="25.4" height="25.4" stroke="#dcdcdc" stroke-width="2.4" fill="#6e7380" /><rect x="17.5" y="17.5" width="16" height="16" fill="#3d4251" /><path d="M26.2 19.3V32.3M19.7 25.8H32.7" stroke="#8fc6f7" stroke-width="4" fill="none" /></g>
<g transform="translate(190,676)" ><g transform="translate(0,2.5)" ><g transform="scale(0.95)"><path d="M0.5 1.5H16L31 16L16.5 31L0.5 14.5Z" fill="#dcdcdc" /><circle cx="6.8" cy="7" r="2.2" fill="#3d4251"/><path d="M9.5 11L11.5 13M12.5 14L21 22.5M9.5 16.5L17.5 24.5" stroke="#5c616d" stroke-width="1.6" fill="none" /></g></g><circle cx="24" cy="8" r="10.2" stroke="#3d4251" stroke-width="0" fill="#3d4251" /><path d="M18.08 5.85A6.3 6.3 0 0 1 29.46 4.85" stroke="#6fd58a" stroke-width="2.4" fill="none"/><path d="M31.05 7.61L25.27 4.6L31.33 1.1Z" fill="#6fd58a"/><path d="M29.92 10.15A6.3 6.3 0 0 1 18.54 11.15" stroke="#6fd58a" stroke-width="2.4" fill="none"/><path d="M16.95 8.39L22.73 11.4L16.67 14.9Z" fill="#6fd58a"/></g>
<g transform="translate(234,676)" ><g transform="translate(0,2.5)" ><g transform="scale(0.95)"><path d="M0.5 1.5H16L31 16L16.5 31L0.5 14.5Z" fill="#dcdcdc" /><circle cx="6.8" cy="7" r="2.2" fill="#3d4251"/><path d="M9.5 11L11.5 13M12.5 14L21 22.5M9.5 16.5L17.5 24.5" stroke="#5c616d" stroke-width="1.6" fill="none" /></g></g><rect x="14" y="-1.5" width="20" height="20" fill="#3d4251" /><rect x="19.5" y="3.5" width="9" height="10" fill="#6fa8dc" /><path d="M19 1.3H29.5M19 15.7H29.5" stroke="#8fc6f7" stroke-width="2.4" fill="none" /><path d="M17 3V14M31.4 3V14" stroke="#8fc6f7" stroke-width="2.4" fill="none" stroke-dasharray="3.2 2"/></g>
<g transform="translate(278,676)" ><rect x="2.8" y="1.2" width="12.6" height="8.6" stroke="#dcdcdc" stroke-width="1.6" fill="#6e7380" /><circle cx="15" cy="9.4" r="3.6" stroke="#dcdcdc" stroke-width="1.4" fill="#8b8f99" /><rect x="0.5" y="8.2" width="3.4" height="3.4" fill="#dcdcdc" /><path d="M30.5 11.5V6.5H24" stroke="#ffffff" stroke-width="2" fill="none" /><path d="M21 6.5L26 3.3L26 9.7Z" fill="#ffffff"/><rect x="11.2" y="17.8" width="12.6" height="9.4" stroke="#8fc6f7" stroke-width="2" fill="#4f6a8c" /><circle cx="25.6" cy="26.2" r="4.6" stroke="#8fc6f7" stroke-width="2" fill="#4f6a8c" /><rect x="8.6" y="25.6" width="4" height="4" fill="#8fc6f7" /></g>
<g transform="translate(20,782)" ><g transform="rotate(0 32 32)"><path d="M32 0L42.5 16.5H34.6V32H29.4V16.5H21.5Z" fill="#fff"/></g><g transform="rotate(90 32 32)"><path d="M32 0L42.5 16.5H34.6V32H29.4V16.5H21.5Z" fill="#fff"/></g><g transform="rotate(180 32 32)"><path d="M32 0L42.5 16.5H34.6V32H29.4V16.5H21.5Z" fill="#fff"/></g><g transform="rotate(270 32 32)"><path d="M32 0L42.5 16.5H34.6V32H29.4V16.5H21.5Z" fill="#fff"/></g></g>
<g transform="translate(102,776)" ><circle cx="6.8" cy="7.4" r="6" stroke="#dcdcdc" stroke-width="2.2" fill="none" /><path d="M16 5H25.5V9.5" stroke="#ffffff" stroke-width="2.2" fill="none" /><path d="M25.5 15.5L21.7 9L29.3 9Z" fill="#ffffff"/><circle cx="14.1" cy="25.2" r="6" stroke="#8fc6f7" stroke-width="2.2" fill="none" /><path d="M22.6 20A6 6 0 1 1 22.6 30.4" stroke="#8fc6f7" stroke-width="2.2" fill="none" /></g>
<g transform="translate(146,776)" ><path d="M14.5 4.3A13.3 13.3 0 1 0 29.2 15.5" stroke="#ffffff" stroke-width="2.2" fill="none" /><path d="M23.5 4.3L15.5 8.8L15.5 -0.2Z" fill="#ffffff"/></g>
<g transform="translate(196,782)" ><path d="M0 4.8H32" stroke="#8fc6f7" stroke-width="2.2" fill="none" stroke-dasharray="8.5 3.5"/><path d="M48.2 4.8L64 4.8" stroke="#dcdcdc" stroke-width="2.2" fill="none" /><path d="M36.9 0.6L43.8 7.9V39.4L36.9 33Z" fill="#fff"/><path d="M15.8 13.6L36.9 32.2L43 43L33.6 41L15.8 24.1Z" fill="#fff"/><ellipse cx="36" cy="55" rx="6.3" ry="7.8" transform="rotate(14 36 55)" stroke="#fff" stroke-width="3.6" fill="none"/><ellipse cx="50.4" cy="49.4" rx="8" ry="6.2" transform="rotate(-28 50.4 49.4)" stroke="#fff" stroke-width="3.6" fill="none"/><path d="M37 40L34.5 48.5L39.5 48.5L43.5 42Z" fill="#fff"/><path d="M40 40L44 45.5L46.5 42L43.5 38Z" fill="#fff"/><circle cx="39" cy="39.2" r="2.3" fill="#3d4251"/><path d="M74 66V74H66Z" fill="#9a9a9a"/></g>
<g transform="translate(278,776)" ><path d="M1 16.5A16 15.5 0 0 1 18 1" stroke="#8fc6f7" stroke-width="2.4" fill="none" /><path d="M20.4 1L32.2 1" stroke="#dcdcdc" stroke-width="2.2" fill="none" /><path d="M1 20.4L1 31.8" stroke="#dcdcdc" stroke-width="2.2" fill="none" /><path d="M38 30V38H30Z" fill="#9a9a9a"/></g>
<g transform="translate(322,776)" ><rect x="2.2" y="2.1" width="11.8" height="11.8" fill="#dcdcdc" /><rect x="18.4" y="2.1" width="11.8" height="11.8" fill="#8fc6f7" /><rect x="2.2" y="18" width="11.8" height="11.8" fill="#8fc6f7" /><rect x="18.4" y="18" width="11.8" height="11.8" fill="#8fc6f7" /><path d="M38 30V38H30Z" fill="#9a9a9a"/></g>
<g transform="translate(102,820)" ><path d="M13.4 3.4V28.4H2.8Z" stroke="#dcdcdc" stroke-width="2.2" fill="none" /><path d="M17.9 3.4V28.4H29.4Z" stroke="#8fc6f7" stroke-width="2.2" fill="none" /></g>
<g transform="translate(146,820)" ><rect x="3" y="2.8" width="19" height="19" stroke="#ffffff" stroke-width="1.8" fill="none" stroke-dasharray="4.5 2.6"/><rect x="0.8" y="0.6" width="4.4" height="4.4" fill="#ffffff"/><rect x="10.3" y="0.6" width="4.4" height="4.4" fill="#ffffff"/><rect x="19.8" y="0.6" width="4.4" height="4.4" fill="#ffffff"/><rect x="0.8" y="10.1" width="4.4" height="4.4" fill="#ffffff"/><rect x="0.8" y="19.6" width="4.4" height="4.4" fill="#ffffff"/><rect x="10.3" y="19.6" width="4.4" height="4.4" fill="#ffffff"/><rect x="10.3" y="10.1" width="4.4" height="4.4" fill="#ffffff"/><path d="M17.5 13.5V32L22.5 27.2H31.5Z" fill="#fff" stroke="#3d4251" stroke-width="1.2"/><path d="M28.2 8V14M25.2 11H31.2" stroke="#ffffff" stroke-width="1.8" fill="none" /></g>
<g transform="translate(278,820)" ><path d="M32 4.8H12A11.3 11.3 0 0 0 12 27.4H32" stroke="#8fc6f7" stroke-width="2.4" fill="none" /><path d="M32 12H12.5A4.1 4.1 0 0 0 12.5 20.3H32" stroke="#dcdcdc" stroke-width="2.4" fill="none" /></g>
<g transform="translate(322,820)" ><path d="M1 12.8L1 29.7" stroke="#8fc6f7" stroke-width="2.2" fill="none" /><path d="M4.7 9.5L12.4 3.9H31.3L24 9.5Z" stroke="#8fc6f7" stroke-width="2.2" fill="none" /><path d="M25.6 12.8L31.3 6.5V20.9L25.6 28.1Z" stroke="#8fc6f7" stroke-width="2.2" fill="none" /><rect x="5.7" y="13.8" width="15" height="15" stroke="#dcdcdc" stroke-width="2.4" fill="none" /></g>
<g transform="translate(14,868)" ><path d="M14 1.8H1.7V30.2H14V24" stroke="#dcdcdc" stroke-width="2.2" fill="none" /><path d="M14 1.8V17" stroke="#dcdcdc" stroke-width="2.2" fill="none" /><path d="M17 1.8H21.5L31 30.2H16.5" stroke="#8fc6f7" stroke-width="2.2" fill="none" /><path d="M8.5 23.4H17" stroke="#ffffff" stroke-width="2.2" fill="none" /><path d="M22.5 23.4L15.5 27.2L15.5 19.6Z" fill="#ffffff"/></g>
<g transform="translate(58,868)" ><path d="M0.5 4.5L4 0.8H18.5V14.5L15 18.5H0.5Z" fill="#b9b9b9" /><rect x="0.5" y="4.5" width="14.5" height="14" fill="#dcdcdc" /><path d="M0.5 4.5L4 0.8H18.5L15 4.5Z" fill="#efefef" /><rect x="18.5" y="18.6" width="14" height="14" fill="#8fc6f7" /><path d="M3 22.5V27.5H8" stroke="#ffffff" stroke-width="2" fill="none" /><path d="M13 27.5L7.5 30.8L7.5 24.2Z" fill="#ffffff"/></g>
<g transform="translate(102,868)" ><path d="M1.7 11V1.7H30.3V30.3H21" stroke="#8fc6f7" stroke-width="2.2" fill="none" /><rect x="1.7" y="15.9" width="15.6" height="14.4" stroke="#dcdcdc" stroke-width="2.2" fill="none" /></g>
<g transform="translate(146,868)" ><path d="M0.5 31.2L31.7 0.9" stroke="#dcdcdc" stroke-width="2.2" fill="none" /><path d="M9.4 10.2L22 21.2" stroke="#8fc6f7" stroke-width="2.4" fill="none" /><path d="M38 30V38H30Z" fill="#9a9a9a"/></g>
<g transform="translate(190,868)" ><path d="M0 16.2L7 16.2" stroke="#dcdcdc" stroke-width="2.2" fill="none" /><path d="M25 16.2L32 16.2" stroke="#dcdcdc" stroke-width="2.2" fill="none" /><path d="M6.8 11.5V20.9L15.7 16.2Z" fill="#8fc6f7" /><path d="M25.2 11.5V20.9L16.6 16.2Z" fill="#8fc6f7" /></g>
<g transform="translate(234,868)" ><rect x="0" y="2" width="19.5" height="15.5" fill="#ababab" /><rect x="10.5" y="12.5" width="23" height="20" fill="#3d4251" /><rect x="12.8" y="15" width="18" height="14.4" stroke="#dcdcdc" stroke-width="2.2" fill="none" /><path d="M16 26.2H26V19Z" fill="#ababab" /><path d="M22 4.5H29.5V8" stroke="#ffffff" stroke-width="2" fill="none" /><path d="M29.5 12L26.3 7L32.7 7Z" fill="#ffffff"/><path d="M7.8 28H3V24.5" stroke="#ffffff" stroke-width="2" fill="none" /><path d="M3 19.8L6.2 24.8L-0.2 24.8Z" fill="#ffffff"/></g>
<g transform="translate(278,868)" ><rect x="1.8" y="1.4" width="16" height="10.6" stroke="#dcdcdc" stroke-width="1.8" fill="#6e7380" /><circle cx="17.8" cy="12.5" r="6.4" stroke="#dcdcdc" stroke-width="1.8" fill="#8b8f99" /><path d="M17.8 6.1V12.5H11.4" stroke="#dcdcdc" stroke-width="1.4" fill="none" /><rect x="-0.3" y="10" width="4" height="4" fill="#dcdcdc" /><path d="M4.6 20.5V27H10" stroke="#ffffff" stroke-width="2.2" fill="none" /><path d="M15.8 27L9.3 30.8L9.3 23.2Z" fill="#ffffff"/><circle cx="25.8" cy="26.3" r="5" stroke="#8fc6f7" stroke-width="2.2" fill="none" /></g>
<g transform="translate(322,868)" ><rect x="14.8" y="0" width="2.6" height="20.5" fill="#cfa874" /><path d="M13 19.5H19.2L20.5 23.5H11.7Z" fill="#c9a36c" /><path d="M11.7 23.5H20.5L25 32H7Z" fill="#f9d67a" /></g>
<g transform="translate(20,974)" ><text x="32" y="60.2" font-family="'Liberation Sans',sans-serif" font-size="78.5" font-weight="400" fill="#dcdcdc" text-anchor="middle" >A</text></g>
<g transform="translate(108,974)" ><text x="22.3" y="50" font-family="'Liberation Sans',sans-serif" font-size="70" font-weight="400" fill="#dcdcdc" text-anchor="middle" >A</text><g transform="translate(28.5,63.5)"><path d="M-2.5 1.5C3 -10 10 -17 19 -19L24 -11C21 -2 12 2 -2.5 1.5Z" fill="#3d4251"/></g><g transform="translate(28.5,63.5) scale(1)"><path d="M0 0C6 -10 12 -15 18 -16L22 -11C20 -4 12 0 0 0Z" fill="#d4b07a"/><path d="M19.5 -17.5L30 -28L35.5 -22.5L24.5 -12Z" fill="#efefef"/></g></g>
<g transform="translate(190,968)" ><text x="16.2" y="28" font-family="'Liberation Sans',sans-serif" font-size="38.5" font-weight="400" fill="#dcdcdc" text-anchor="middle" >A</text><rect x="0" y="29.4" width="32" height="2.2" fill="#8fc6f7" /></g>
<g transform="translate(234,968)" ><text x="0.5" y="13.2" font-family="'Liberation Sans',sans-serif" font-size="14.2" font-weight="700" fill="#dcdcdc" text-anchor="start" textLength="30.5" lengthAdjust="spacingAndGlyphs">ABC</text><path d="M6 21.5L12 27.5L24.5 15.5" stroke="#6fd58a" stroke-width="4" fill="none" /></g>
<g transform="translate(278,968)" ><rect x="8" y="14.5" width="24.2" height="9.5" fill="#8fc6f7" /><rect x="8" y="25" width="24.2" height="7" fill="#dcdcdc" /><rect x="-1.2" y="-0.7" width="20.4" height="20" fill="#3d4251" /><rect x="0" y="0.5" width="18" height="17.6" fill="#f1f1f1" /><rect x="3.8" y="4.5" width="2.4" height="2.2" fill="#2e7be0" /><rect x="7.4" y="4.5" width="7.2" height="2.2" fill="#2e7be0" /><rect x="3.8" y="9.1" width="2.4" height="2.2" fill="#2e7be0" /><rect x="7.4" y="9.1" width="7.2" height="2.2" fill="#2e7be0" /><rect x="3.8" y="13.7" width="2.4" height="2.2" fill="#2e7be0" /><rect x="7.4" y="13.7" width="7.2" height="2.2" fill="#2e7be0" /><text x="19.6" y="12.4" font-family="'Liberation Sans',sans-serif" font-size="16.5" font-weight="700" fill="#8fc6f7" text-anchor="start" >A</text></g>
<g transform="translate(322,968)" ><text x="1.5" y="10" font-family="'Liberation Sans',sans-serif" font-size="10.6" font-weight="700" fill="#dcdcdc" text-anchor="start" textLength="22.5" lengthAdjust="spacingAndGlyphs">PDF</text><path d="M5 14.5V22.5H10" stroke="#ffffff" stroke-width="2" fill="none" /><path d="M15 22.5L9.5 25.7L9.5 19.3Z" fill="#ffffff"/><text x="16.3" y="30" font-family="'Liberation Sans',sans-serif" font-size="22" font-weight="400" fill="#8fc6f7" text-anchor="start" >A</text></g>
<g transform="translate(190,1012)" ><rect x="0" y="0.4" width="22" height="23.6" fill="#dcdcdc" /><path d="M4.1 5.1H17.8M4.1 9.2H17.8M4.1 13.1H17.8" stroke="#5e5e5e" stroke-width="1.9" fill="none" /><path d="M23.2 10.5L10.5 34H36V10.5Z" fill="#3d4251" /><path d="M24.5 3.5H29.5V7.5" stroke="#ffffff" stroke-width="2" fill="none" /><path d="M29.5 12.8L26.2 7.3L32.8 7.3Z" fill="#ffffff"/><text x="23.2" y="32" font-family="'Liberation Sans',sans-serif" font-size="25" font-weight="400" fill="#ffffff" text-anchor="middle" >A</text></g>
<g transform="translate(234,1012)" ><circle cx="13" cy="13.2" r="12" stroke="#f4f4f4" stroke-width="2.2" fill="none" /><text x="13" y="20.5" font-family="'Liberation Sans',sans-serif" font-size="19.5" font-weight="400" fill="#dcdcdc" text-anchor="middle" >A</text><path d="M22 22.5L31 31.5" stroke="#d4b07a" stroke-width="3" fill="none" /></g>
<g transform="translate(278,1012)" ><text x="1.5" y="12.8" font-family="'Liberation Sans',sans-serif" font-size="16.5" font-weight="700" fill="#8fc6f7" text-anchor="start" >A</text><path d="M18.67 6.18A6.2 6.2 0 0 1 29.87 5.2" stroke="#6fd58a" stroke-width="2.4" fill="none"/><path d="M31.46 7.96L25.68 4.95L31.75 1.45Z" fill="#6fd58a"/><path d="M30.33 10.42A6.2 6.2 0 0 1 19.13 11.4" stroke="#6fd58a" stroke-width="2.4" fill="none"/><path d="M17.54 8.64L23.32 11.65L17.25 15.15Z" fill="#6fd58a"/><path d="M0 15.5H17L24 18V22.5H0Z" fill="#8fc6f7" /><rect x="0" y="24.5" width="24" height="7" fill="#dcdcdc" /></g>
<g transform="translate(322,1012)" ><text x="-0.5" y="10" font-family="'Liberation Sans',sans-serif" font-size="10.6" font-weight="700" fill="#dcdcdc" text-anchor="start" textLength="22.5" lengthAdjust="spacingAndGlyphs">PDF</text><path d="M3 14.5V22.5H8" stroke="#ffffff" stroke-width="2" fill="none" /><path d="M13 22.5L7.5 25.7L7.5 19.3Z" fill="#ffffff"/><path d="M14.9 27.7L20.8 12.5L24.1 21M17.5 20.5H22" stroke="#dcdcdc" stroke-width="2" fill="none" /><path d="M17.5 31.4L27 22.7" stroke="#3d4251" stroke-width="5.2" fill="none" /><path d="M17.5 31.4L27.2 22.5" stroke="#8fc6f7" stroke-width="3.2" fill="none" /><path d="M26.2 23.6A4.3 4.3 0 0 1 26.5 17.2L28.8 20.8L32.6 18.6A4.3 4.3 0 0 1 26.2 23.6Z" stroke="#8fc6f7" stroke-width="1" fill="#8fc6f7" /></g>
<g transform="translate(20,1118)" ><path d="M1 0V64M63 0V64" stroke="#dcdcdc" stroke-width="2.4" fill="none" /><path d="M10.8 13L53.2 13" stroke="#dcdcdc" stroke-width="2.4" fill="none" /><path d="M2.8 13L11.8 8L11.8 18Z" fill="#dcdcdc"/><path d="M61.2 13L52.2 18L52.2 8Z" fill="#dcdcdc"/><g transform="translate(32,60.5) rotate(-90)"><path d="M13.5 0L16.1 -2.9L26.5 0L16.1 2.9Z" fill="#f9d67a"/></g><g transform="translate(32,60.5) rotate(-40)"><path d="M12.5 0L15.1 -2.9L25.5 0L15.1 2.9Z" fill="#f9d67a"/></g><g transform="translate(32,60.5) rotate(-140)"><path d="M12.5 0L15.1 -2.9L25.5 0L15.1 2.9Z" fill="#f9d67a"/></g><g transform="translate(32,60.5) rotate(-3)"><path d="M11.5 0L14.1 -2.9L24.5 0L14.1 2.9Z" fill="#f9d67a"/></g><g transform="translate(32,60.5) rotate(183)"><path d="M11.5 0L14.1 -2.9L24.5 0L14.1 2.9Z" fill="#f9d67a"/></g></g>
<g transform="translate(108,1118)" ><path d="M0.8 23V57M62.8 23V57" stroke="#dcdcdc" stroke-width="2.4" fill="none" /><path d="M10.6 40L53 40" stroke="#dcdcdc" stroke-width="2.4" fill="none" /><path d="M2.6 40L11.6 35L11.6 45Z" fill="#dcdcdc"/><path d="M61 40L52 45L52 35Z" fill="#dcdcdc"/><g transform="translate(28.5,35.5)"><path d="M-2.5 1.5C3 -10 10 -17 19 -19L24 -11C21 -2 12 2 -2.5 1.5Z" fill="#3d4251"/></g><g transform="translate(28.5,35.5) scale(1)"><path d="M0 0C6 -10 12 -15 18 -16L22 -11C20 -4 12 0 0 0Z" fill="#d4b07a"/><path d="M19.5 -17.5L30 -28L35.5 -22.5L24.5 -12Z" fill="#efefef"/></g></g>
<g transform="translate(190,1112)" ><path d="M1.1 2V30M31 2V30" stroke="#dcdcdc" stroke-width="2.2" fill="none" /><path d="M7.5 11.3L24.7 11.3" stroke="#8fc6f7" stroke-width="2" fill="none" /><path d="M3 11.3L8.5 8.3L8.5 14.3Z" fill="#8fc6f7"/><path d="M29.2 11.3L23.7 14.3L23.7 8.3Z" fill="#8fc6f7"/><path d="M38 30V38H30Z" fill="#9a9a9a"/></g>
<g transform="translate(234,1112)" ><circle cx="15.8" cy="15.9" r="14.1" stroke="#dcdcdc" stroke-width="2.2" fill="none" /><path d="M15.8 10.8V21.2M10.6 16H21" stroke="#8fc6f7" stroke-width="2.4" fill="none" /><path d="M38 30V38H30Z" fill="#9a9a9a"/></g>
<g transform="translate(278,1112)" ><path d="M0 12.8L10 12.8" stroke="#8fc6f7" stroke-width="2.2" fill="none" /><path d="M16 12.8L24 12.8" stroke="#8fc6f7" stroke-width="2.2" fill="none" /><path d="M30.6 12.8L23 17.9L23 7.7Z" fill="#8fc6f7"/><path d="M32 6L32 20" stroke="#dcdcdc" stroke-width="2.2" fill="none" /><path d="M13.2 0L13.2 24" stroke="#dcdcdc" stroke-width="2.2" fill="none" /><path d="M13.2 29.6L8 22.2L18.4 22.2Z" fill="#dcdcdc"/><path d="M6 31L20.5 31" stroke="#dcdcdc" stroke-width="2.2" fill="none" /></g>
<g transform="translate(322,1112)" ><path d="M4.5 4.2L27.5 4.2" stroke="#dcdcdc" stroke-width="2" fill="none" /><path d="M0 4.2L5.5 1.2L5.5 7.2Z" fill="#dcdcdc"/><path d="M32 4.2L26.5 7.2L26.5 1.2Z" fill="#dcdcdc"/><path d="M4.5 28.2L27.5 28.2" stroke="#dcdcdc" stroke-width="2" fill="none" /><path d="M0 28.2L5.5 25.2L5.5 31.2Z" fill="#dcdcdc"/><path d="M32 28.2L26.5 31.2L26.5 25.2Z" fill="#dcdcdc"/><rect x="12" y="7.2" width="8.4" height="18" fill="#f9d67a" /><path d="M12 11.2H16M12 15H15M12 18.8H16M12 22.4H15" stroke="#4a4f5c" stroke-width="1.5" fill="none" /></g>
<g transform="translate(190,1156)" ><path d="M1.6 2.5V30M16 2.5V30M30.4 2.5V30" stroke="#dcdcdc" stroke-width="2.2" fill="none" /><path d="M7.4 11.5L10.2 11.5" stroke="#8fc6f7" stroke-width="2" fill="none" /><path d="M3.2 11.5L8.4 8L8.4 15Z" fill="#8fc6f7"/><path d="M14.4 11.5L9.2 15L9.2 8Z" fill="#8fc6f7"/><path d="M21.8 11.5L24.6 11.5" stroke="#8fc6f7" stroke-width="2" fill="none" /><path d="M17.6 11.5L22.8 8L22.8 15Z" fill="#8fc6f7"/><path d="M28.8 11.5L23.6 15L23.6 8Z" fill="#8fc6f7"/><path d="M38 30V38H30Z" fill="#9a9a9a"/></g>
<g transform="translate(234,1156)" ><rect x="1" y="5" width="30" height="22.5" stroke="#f1f1f1" stroke-width="2" fill="none" /><path d="M16.5 5L16.5 27.5" stroke="#f1f1f1" stroke-width="2" fill="none" /><circle cx="9" cy="16.5" r="4.2" stroke="#ffffff" stroke-width="1.8" fill="none" /><path d="M9 10V23M2.5 16.5H15.5" stroke="#ffffff" stroke-width="1.8" fill="none" /><text x="18.6" y="23.6" font-family="'Liberation Sans',sans-serif" font-size="16.5" font-weight="700" fill="#ffffff" text-anchor="start" textLength="9.6" lengthAdjust="spacingAndGlyphs">.1</text></g>
<g transform="translate(278,1156)" ><path d="M1 0V32M31.4 0V32" stroke="#dcdcdc" stroke-width="2.2" fill="none" /><path d="M7.3 7.2L25.1 7.2" stroke="#dcdcdc" stroke-width="2" fill="none" /><path d="M2.8 7.2L8.3 4.2L8.3 10.2Z" fill="#dcdcdc"/><path d="M29.6 7.2L24.1 10.2L24.1 4.2Z" fill="#dcdcdc"/><path d="M10.5 22L15.5 27L24 18.5" stroke="#6fd58a" stroke-width="3.8" fill="none" /></g>
<g transform="translate(322,1156)" ><path d="M0.5 11.5L11.5 0.8" stroke="#dcdcdc" stroke-width="2.2" fill="none" /><path d="M21 31.5L32 21.5" stroke="#dcdcdc" stroke-width="2.2" fill="none" /><path d="M9.5 9.5L23 23.5" stroke="#dcdcdc" stroke-width="2" fill="none" /><path d="M6.4 6.3L12.38 8.17L8.06 12.34Z" fill="#dcdcdc"/><path d="M26 26.8L20.02 24.93L24.34 20.76Z" fill="#dcdcdc"/><text x="18" y="13.6" font-family="'Liberation Sans',sans-serif" font-size="13.5" font-weight="700" fill="#8fc6f7" text-anchor="start" >X</text><path d="M38 30V38H30Z" fill="#9a9a9a"/></g>
<g transform="translate(20,1262)" ><circle cx="49" cy="17.2" r="14.4" stroke="#dcdcdc" stroke-width="2.4" fill="none" /><path d="M34.6 17.2H25.8L6.02 51.32" stroke="#dcdcdc" stroke-width="2.4" fill="none" /><path d="M0 61.7L1.33 47.44L11.71 53.46Z" fill="#dcdcdc"/></g>
<g transform="translate(108,1262)" ><circle cx="49" cy="17.2" r="14.4" stroke="#dcdcdc" stroke-width="2.4" fill="none" /><path d="M34.6 17.2H25.8L6.02 51.32" stroke="#dcdcdc" stroke-width="2.4" fill="none" /><path d="M0 61.7L1.33 47.44L11.71 53.46Z" fill="#dcdcdc"/><g transform="translate(28.5,63.5) scale(1)"><path d="M0 0C6 -10 12 -15 18 -16L22 -11C20 -4 12 0 0 0Z" fill="#d4b07a"/><path d="M19.5 -17.5L30 -28L35.5 -22.5L24.5 -12Z" fill="#efefef"/></g></g>
<g transform="translate(190,1256)" ><path d="M8.2 0.3V16.5M0.1 8.4H16.3" stroke="#6fd58a" stroke-width="4.4" fill="none" /><circle cx="27" cy="15.2" r="3.9" stroke="#dcdcdc" stroke-width="2.2" fill="none" /><path d="M23.2 15.2H17.2" stroke="#dcdcdc" stroke-width="2.2" fill="none" /><path d="M17.5 15L8.6 27.5" stroke="#dcdcdc" stroke-width="2.2" fill="none" /><path d="M5.4 32L6.96 23.32L13.02 27.57Z" fill="#dcdcdc"/><path d="M17.5 15L23.6 27.5" stroke="#dcdcdc" stroke-width="2.2" fill="none" /><path d="M25.8 32L18.97 26.43L25.62 23.19Z" fill="#dcdcdc"/></g>
<g transform="translate(234,1256)" ><circle cx="23" cy="5.1" r="4" stroke="#dcdcdc" stroke-width="2.2" fill="none" /><path d="M19 5.1H7.2L3.44 12.05" stroke="#dcdcdc" stroke-width="2.2" fill="none" /><path d="M0.1 18.2L0.66 9.4L7.16 12.93Z" fill="#dcdcdc"/><circle cx="23" cy="17.3" r="4" stroke="#dcdcdc" stroke-width="2.2" fill="none" /><path d="M19 17.3H13.2L7.55 26.19" stroke="#dcdcdc" stroke-width="2.2" fill="none" /><path d="M3.8 32.1L4.97 23.36L11.21 27.33Z" fill="#dcdcdc"/><path d="M31 0.5L31 32" stroke="#8fc6f7" stroke-width="2.4" fill="none" /></g>
<g transform="translate(278,1256)" ><circle cx="24.9" cy="9.2" r="6.1" stroke="#dcdcdc" stroke-width="2.3" fill="none" /><path d="M18.8 9.2H11.8L3.94 22.84" stroke="#dcdcdc" stroke-width="2.3" fill="none" /><path d="M-0.3 30.2L0.72 19.82L8.17 24.12Z" fill="#dcdcdc"/><path transform="translate(16.2,15.4) rotate(22 8 8) scale(1.14)" d="M9.5 0L0 9.5H6L3.5 16.5L14 6.5H8L11.5 0Z" fill="#f9d67a"/></g>
<g transform="translate(190,1300)" ><path d="M1.4 1.4L13.2 13.2M13.2 1.4L1.4 13.2" stroke="#ee6a5f" stroke-width="4.2" fill="none" /><circle cx="27" cy="15.2" r="3.9" stroke="#dcdcdc" stroke-width="2.2" fill="none" /><path d="M23.2 15.2H17.2" stroke="#dcdcdc" stroke-width="2.2" fill="none" /><path d="M17.5 15L8.6 27.5" stroke="#dcdcdc" stroke-width="2.2" fill="none" /><path d="M5.4 32L6.96 23.32L13.02 27.57Z" fill="#dcdcdc"/><path d="M17.5 15L23.6 27.5" stroke="#dcdcdc" stroke-width="2.2" fill="none" /><path d="M25.8 32L18.97 26.43L25.62 23.19Z" fill="#dcdcdc"/></g>
<g transform="translate(234,1300)" ><circle cx="24.9" cy="23.2" r="6" stroke="#dcdcdc" stroke-width="2.4" fill="none" /><circle cx="24.9" cy="8.8" r="6" stroke="#dcdcdc" stroke-width="2.3" fill="none" /><path d="M18.9 8.8H11.8L4.16 22.83" stroke="#dcdcdc" stroke-width="2.3" fill="none" /><path d="M0.1 30.3L0.86 19.9L8.42 24.01Z" fill="#dcdcdc"/></g>
<g transform="translate(20,1406)" ><rect x="2" y="6" width="60" height="52" stroke="#dcdcdc" stroke-width="2.4" fill="none" /><path d="M2 21H62M2 34H62M2 46H62M22 21V58M42 21V58" stroke="#dcdcdc" stroke-width="2.4" fill="none" /><circle cx="66" cy="-2.5" r="10" fill="#fff"/><circle cx="66" cy="-2.5" r="8" fill="#e8783d"/></g>
<g transform="translate(108,1406)" ><rect x="1.5" y="2" width="54.5" height="50" stroke="#dcdcdc" stroke-width="2.4" fill="none" /><path d="M1.5 18H56M1.5 29.5H56M1.5 41H56M20 18V52M38 18V52" stroke="#dcdcdc" stroke-width="2.4" fill="none" /><g transform="translate(28.5,63.5)"><path d="M-3 2C3 -11 10 -18 19 -20L38 -37L44 -31L25 -12C21 -1 12 3 -3 2Z" fill="#3d4251"/></g><g transform="translate(28.5,63.5) scale(1)"><path d="M0 0C6 -10 12 -15 18 -16L22 -11C20 -4 12 0 0 0Z" fill="#d4b07a"/><path d="M19.5 -17.5L30 -28L35.5 -22.5L24.5 -12Z" fill="#efefef"/></g><circle cx="65.8" cy="-2.5" r="10" fill="#fff"/><circle cx="65.8" cy="-2.5" r="8" fill="#e8783d"/></g>
<g transform="translate(190,1400)" ><path d="M10 3.6H22.6L32.2 13.2V19H10Z" fill="#dadada" /><path d="M22.6 3.6V13.2H32.2Z" fill="#f4f4f4" /><rect x="10" y="9.2" width="10" height="7" fill="#a6a6a6" /><rect x="11.2" y="11.2" width="3" height="2" fill="#f1f1f1" /><rect x="15.3" y="11.2" width="3" height="2" fill="#f1f1f1" /><rect x="0" y="19" width="12.5" height="9" fill="#d6d6d6" /><rect x="6.4" y="15.5" width="6.1" height="8" fill="#b9b9b9" /><g transform="translate(0.9,1) scale(1)"><rect x="-2" y="-2" width="10.2" height="22.6" rx="5" fill="#3d4251"/><rect x="0.1" y="0.1" width="6.2" height="9.6" rx="3.1" stroke="#f5bf8c" stroke-width="2.2" fill="none"/><rect x="0.1" y="8.4" width="6.2" height="9.8" rx="3.1" stroke="#f5bf8c" stroke-width="2.2" fill="none"/></g><rect x="12.8" y="14.6" width="20.6" height="18.7" fill="#3d4251" /><rect x="14" y="15.8" width="18.2" height="16.3" fill="#f1f1f1" /><rect x="14" y="15.8" width="18.2" height="3.8" fill="#a2a2a2" /><rect x="18" y="23" width="2.2" height="2" fill="#555" /><rect x="21.6" y="23" width="6.6" height="2" fill="#555" /><rect x="18" y="27" width="2.2" height="2" fill="#555" /><rect x="21.6" y="27" width="6.6" height="2" fill="#555" /></g>
<g transform="translate(234,1400)" ><path d="M10.4 2.1H22.6L32.2 11.8V19.9H20V25.8H0V19.2H10.4Z" fill="#dadada" /><path d="M22.6 2.1V11.8H32.2Z" fill="#f4f4f4" /><rect x="6.7" y="7.3" width="15.2" height="13" fill="#a3a3a3" /><rect x="10.5" y="9.2" width="3.1" height="1.9" fill="#f1f1f1" /><rect x="10.5" y="13.3" width="3.1" height="1.9" fill="#f1f1f1" /><rect x="10.5" y="17.4" width="3.1" height="1.9" fill="#f1f1f1" /><rect x="14.8" y="9.2" width="3.1" height="1.9" fill="#f1f1f1" /><rect x="14.8" y="13.3" width="3.1" height="1.9" fill="#f1f1f1" /><rect x="14.8" y="17.4" width="3.1" height="1.9" fill="#f1f1f1" /><rect x="19.1" y="9.2" width="3.1" height="1.9" fill="#f1f1f1" /><rect x="19.1" y="13.3" width="3.1" height="1.9" fill="#f1f1f1" /><rect x="19.1" y="17.4" width="3.1" height="1.9" fill="#f1f1f1" /><g transform="translate(0.9,1) scale(1)"><rect x="-2" y="-2" width="10.2" height="22.6" rx="5" fill="#3d4251"/><rect x="0.1" y="0.1" width="6.2" height="9.6" rx="3.1" stroke="#f5bf8c" stroke-width="2.2" fill="none"/><rect x="0.1" y="8.4" width="6.2" height="9.8" rx="3.1" stroke="#f5bf8c" stroke-width="2.2" fill="none"/></g><path d="M23.7 14H28.2V22.1H32.2L26 31.7L19.7 22.1H23.7Z" fill="#3d4251" stroke="#3d4251" stroke-width="2.4" stroke-linejoin="miter"/><path d="M23.7 14H28.2V22.1H32.2L26 31.7L19.7 22.1H23.7Z" fill="#8fc6f7" /></g>
<g transform="translate(190,1444)" ><rect x="8" y="14.5" width="24.2" height="9.5" fill="#8fc6f7" /><rect x="8" y="25" width="24.2" height="7" fill="#dcdcdc" /><rect x="-1.2" y="-0.7" width="20.4" height="20" fill="#3d4251" /><rect x="0" y="0.5" width="18" height="17.6" fill="#f1f1f1" /><rect x="3.8" y="4.5" width="2.4" height="2.2" fill="#2e7be0" /><rect x="7.4" y="4.5" width="7.2" height="2.2" fill="#2e7be0" /><rect x="3.8" y="9.1" width="2.4" height="2.2" fill="#2e7be0" /><rect x="7.4" y="9.1" width="7.2" height="2.2" fill="#2e7be0" /><rect x="3.8" y="13.7" width="2.4" height="2.2" fill="#2e7be0" /><rect x="7.4" y="13.7" width="7.2" height="2.2" fill="#2e7be0" /><text x="19.6" y="12.4" font-family="'Liberation Sans',sans-serif" font-size="16.5" font-weight="700" fill="#8fc6f7" text-anchor="start" >A</text></g>
<g transform="translate(234,1444)" ><path d="M9.5 8H14L28 15L32.2 18.8V31.7H0V18.8H9.5Z" fill="#dadada" /><path d="M27 14.8L32.2 18.8H27Z" fill="#f4f4f4" /><path d="M10.4 8.2H13.6V12.4H17.5V16.4H26V25.8H6.4V16.4H10.4Z" fill="#a3a3a3" /><rect x="11" y="9.2" width="2.2" height="2" fill="#f1f1f1" /><rect x="11" y="13.4" width="2.6" height="1.9" fill="#f1f1f1" /><rect x="14.7" y="13.4" width="2.6" height="1.9" fill="#f1f1f1" /><rect x="8.2" y="18.2" width="3.2" height="1.9" fill="#f1f1f1" /><rect x="12.8" y="18.2" width="3.2" height="1.9" fill="#f1f1f1" /><rect x="17.4" y="18.2" width="3.2" height="1.9" fill="#f1f1f1" /><rect x="8.2" y="22.2" width="3.2" height="1.9" fill="#f1f1f1" /><rect x="12.8" y="22.2" width="3.2" height="1.9" fill="#f1f1f1" /><rect x="17.4" y="22.2" width="3.2" height="1.9" fill="#f1f1f1" /><rect x="22" y="22.2" width="3.2" height="1.9" fill="#f1f1f1" /><g transform="translate(0.9,0.3) scale(1)"><rect x="-2" y="-2" width="10.2" height="22.6" rx="5" fill="#3d4251"/><rect x="0.1" y="0.1" width="6.2" height="9.6" rx="3.1" stroke="#f5bf8c" stroke-width="2.2" fill="none"/><rect x="0.1" y="8.4" width="6.2" height="9.8" rx="3.1" stroke="#f5bf8c" stroke-width="2.2" fill="none"/></g><circle cx="24.1" cy="7.3" r="10" stroke="#3d4251" stroke-width="0" fill="#3d4251" /><path d="M18.18 5.15A6.3 6.3 0 0 1 29.56 4.15" stroke="#6fd58a" stroke-width="2.4" fill="none"/><path d="M31.15 6.91L25.37 3.9L31.43 0.4Z" fill="#6fd58a"/><path d="M30.02 9.45A6.3 6.3 0 0 1 18.64 10.45" stroke="#6fd58a" stroke-width="2.4" fill="none"/><path d="M17.05 7.69L22.83 10.7L16.77 14.2Z" fill="#6fd58a"/></g>
<g transform="translate(20,1550)" ><path d="M3 0L3 58" stroke="#e0736d" stroke-width="2.4" fill="none" /><rect x="0" y="58" width="6" height="6" fill="#e0736d" /><path d="M8.3 61L64 61" stroke="#dcdcdc" stroke-width="2.4" fill="none" /><path d="M74 66V74H66Z" fill="#9a9a9a"/></g>
<g transform="translate(102,1544)" ><rect x="0" y="14.5" width="13" height="10" fill="#dcdcdc" /><rect x="13.5" y="0.2" width="13" height="10" fill="#8fc6f7" /><path d="M13.4 0.2L13.4 24.5" stroke="#e0736d" stroke-width="2" fill="none" /><path transform="translate(15.2,14.6) rotate(20 8 8) scale(1.16)" d="M9.5 0L0 9.5H6L3.5 16.5L14 6.5H8L11.5 0Z" fill="#f9d67a" stroke="#3d4251" stroke-width="1.2"/></g>
<g transform="translate(146,1544)" ><path d="M6.5 0.9H1.2V27.6H6.5" stroke="#ffffff" stroke-width="2" fill="none" /><path d="M23 0.9H28.4V10" stroke="#ffffff" stroke-width="2" fill="none" /><path d="M6.5 10.5L18 22.5" stroke="#e0736d" stroke-width="2.2" fill="none" /><path d="M12.5 16.5L22.5 7" stroke="#c9c9c9" stroke-width="2.2" fill="none" /><circle cx="26.5" cy="21" r="6" fill="#f9d67a"/><path d="M23.5 27.6h6l-1 3.4h-4z" fill="#f2f2f2"/></g>
<g transform="translate(196,1550)" ><path d="M1 0V64M63.2 0V64" stroke="#dcdcdc" stroke-width="2.4" fill="none" /><path d="M10.8 13.2L53.4 13.2" stroke="#dcdcdc" stroke-width="2.4" fill="none" /><path d="M2.8 13.2L11.8 8.2L11.8 18.2Z" fill="#dcdcdc"/><path d="M61.4 13.2L52.4 18.2L52.4 8.2Z" fill="#dcdcdc"/><path d="M24.5 42V35A7.5 7.5 0 0 1 39.5 35V42" stroke="#f9d67a" stroke-width="4.6" fill="none" /><rect x="19" y="40.5" width="26" height="19.5" fill="#f9d67a" /><rect x="31" y="46" width="2.4" height="8" fill="#4a4f5c" /><path d="M74 66V74H66Z" fill="#9a9a9a"/></g>
<g transform="translate(278,1544)" ><path d="M1 0.5V32M31.5 0.5V32" stroke="#dcdcdc" stroke-width="2.2" fill="none" /><path d="M7.1 7L25.4 7" stroke="#dcdcdc" stroke-width="2" fill="none" /><path d="M2.6 7L8.1 4L8.1 10Z" fill="#dcdcdc"/><path d="M29.9 7L24.4 10L24.4 4Z" fill="#dcdcdc"/><path d="M12.79 26.19A5.6 5.6 0 0 1 14.08 16.34" stroke="#8fc6f7" stroke-width="2.2" fill="none"/><path d="M16.59 15.43L13.33 19.91L11.21 14.09Z" fill="#8fc6f7"/><path d="M19.21 17.01A5.6 5.6 0 0 1 17.92 26.86" stroke="#ee6a5f" stroke-width="2.2" fill="none"/><path d="M15.41 27.77L18.67 23.29L20.79 29.11Z" fill="#ee6a5f"/></g>
<g transform="translate(322,1544)" ><path d="M1 0.5V32M28 0.5V13" stroke="#dcdcdc" stroke-width="2.2" fill="none" /><path d="M7.1 7L21.9 7" stroke="#dcdcdc" stroke-width="2" fill="none" /><path d="M2.6 7L8.1 4L8.1 10Z" fill="#dcdcdc"/><path d="M26.4 7L20.9 10L20.9 4Z" fill="#dcdcdc"/><circle cx="26.5" cy="21" r="6" fill="#f9d67a"/><path d="M23.5 27.6h6l-1 3.4h-4z" fill="#f2f2f2"/></g>
<g transform="translate(102,1588)" ><path d="M6.5 0.9H1.2V27.6H6.5" stroke="#ffffff" stroke-width="2" fill="none" /><path d="M23 0.9H28.4V10" stroke="#ffffff" stroke-width="2" fill="none" /><path d="M6.5 10.5L18 22.5" stroke="#e0736d" stroke-width="2.2" fill="none" /><path d="M12.5 16.5L22.5 7" stroke="#c9c9c9" stroke-width="2.2" fill="none" /><circle cx="26.5" cy="21" r="6" fill="#f9d67a"/><path d="M26.5 15A6 6 0 0 1 26.5 27Z" fill="#7fd6e0"/><path d="M23.5 27.6h6l-1 3.4h-4z" fill="#f2f2f2"/></g>
<g transform="translate(146,1588)" ><path d="M6.5 0.9H1.2V27.6H6.5" stroke="#ffffff" stroke-width="2" fill="none" /><path d="M23 0.9H28.4V10" stroke="#ffffff" stroke-width="2" fill="none" /><path d="M6.5 10.5L18 22.5" stroke="#e0736d" stroke-width="2.2" fill="none" /><path d="M12.5 16.5L22.5 7" stroke="#c9c9c9" stroke-width="2.2" fill="none" /><circle cx="26.5" cy="21" r="6" fill="#7fd6e0"/><path d="M23.5 27.6h6l-1 3.4h-4z" fill="#f2f2f2"/></g>
<g transform="translate(278,1588)" ><path d="M1 0.5V32M28 0.5V13" stroke="#dcdcdc" stroke-width="2.2" fill="none" /><path d="M7.1 7L21.9 7" stroke="#dcdcdc" stroke-width="2" fill="none" /><path d="M2.6 7L8.1 4L8.1 10Z" fill="#dcdcdc"/><path d="M26.4 7L20.9 10L20.9 4Z" fill="#dcdcdc"/><circle cx="26.5" cy="21" r="6" fill="#f9d67a"/><path d="M26.5 15A6 6 0 0 1 26.5 27Z" fill="#7fd6e0"/><path d="M23.5 27.6h6l-1 3.4h-4z" fill="#f2f2f2"/></g>
<g transform="translate(322,1588)" ><path d="M1 0.5V32M28 0.5V13" stroke="#dcdcdc" stroke-width="2.2" fill="none" /><path d="M7.1 7L21.9 7" stroke="#dcdcdc" stroke-width="2" fill="none" /><path d="M2.6 7L8.1 4L8.1 10Z" fill="#dcdcdc"/><path d="M26.4 7L20.9 10L20.9 4Z" fill="#dcdcdc"/><circle cx="26.5" cy="21" r="6" fill="#7fd6e0"/><path d="M23.5 27.6h6l-1 3.4h-4z" fill="#f2f2f2"/></g>
<path d="M42 1930.5V1954M30.5 1942.2H53.5" stroke="#e4e4e4" stroke-width="2"/>
<rect x="91" y="1932" width="23" height="2" fill="#e4e4e4" /><rect x="91" y="1938" width="23" height="2" fill="#e4e4e4" /><rect x="88" y="1943.5" width="17" height="4" fill="#e4e4e4" /><rect x="93" y="1950" width="21" height="2" fill="#e4e4e4" /><path d="M107 1947.5H114L110.5 1943Z" fill="#e4e4e4"/>
<text x="2084.5" y="1948.3" font-family="'Liberation Sans',sans-serif" font-size="22.6" font-weight="400" fill="#c9c9c9" text-anchor="start" textLength="208" lengthAdjust="spacingAndGlyphs">1.921, -0.050, 0.000</text>
<path d="M2313.1 1925V1955M2322.1 1925V1955M2331 1925V1955M2306.8 1931.9H2337.3M2306.8 1940.1H2337.3M2306.8 1948.1H2337.3" stroke="#e6e6e6" stroke-width="2.2" fill="none" />
<rect x="2353.5" y="1928" width="4.6" height="4.6" fill="#e6e6e6"/>
<rect x="2353.5" y="1937.8" width="4.6" height="4.6" fill="#e6e6e6"/>
<rect x="2353.5" y="1947.5" width="4.6" height="4.6" fill="#e6e6e6"/>
<rect x="2363.6" y="1928" width="4.6" height="4.6" fill="#e6e6e6"/>
<rect x="2363.6" y="1937.8" width="4.6" height="4.6" fill="#e6e6e6"/>
<rect x="2363.6" y="1947.5" width="4.6" height="4.6" fill="#e6e6e6"/>
<rect x="2373.8" y="1928" width="4.6" height="4.6" fill="#e6e6e6"/>
<rect x="2373.8" y="1937.8" width="4.6" height="4.6" fill="#e6e6e6"/>
<rect x="2373.8" y="1947.5" width="4.6" height="4.6" fill="#e6e6e6"/>
<path d="M2395 1924V1955H2426M2395 1945H2405.5V1955" stroke="#e6e6e6" stroke-width="2.2" fill="none" />
<rect x="2434" y="1920" width="40" height="40.3" fill="#6a8cbd" />
<circle cx="2450.7" cy="1941.4" r="12.4" stroke="#ffffff" stroke-width="2.4" fill="none" /><path d="M2470.5 1941.4H2450.7L2465.4 1926" stroke="#ffffff" stroke-width="2.4" fill="none" />
<path d="M2488.5 1928.5V1942.5M2481.5 1935.5H2495.5" stroke="#e6e6e6" stroke-width="2.2" fill="none" /><rect x="2493.8" y="1944" width="20.6" height="8.4" fill="#e6e6e6" /><rect x="2496" y="1946.4" width="2.6" height="3.6" fill="#3b4354" />
<rect x="2526.5" y="1927.2" width="31.5" height="2.4" fill="#e6e6e6" /><rect x="2526.5" y="1935.2" width="31.5" height="2.4" fill="#e6e6e6" /><rect x="2526.5" y="1935.2" width="16.5" height="6.4" fill="#e6e6e6" /><rect x="2526.5" y="1945.6" width="31.5" height="2.4" fill="#e6e6e6" /><rect x="2526.5" y="1945.6" width="16.5" height="7.4" fill="#e6e6e6" />
<rect x="2566" y="1920" width="40" height="40.3" fill="#6a8cbd" />
<rect x="2573.4" y="1927.8" width="25.6" height="25.2" stroke="#ffffff" stroke-width="2.2" fill="none" />
<rect x="2576" y="1930.4" width="4.1" height="4.04" fill="#ffffff" /><rect x="2576" y="1938.48" width="4.1" height="4.04" fill="#ffffff" /><rect x="2576" y="1946.56" width="4.1" height="4.04" fill="#ffffff" /><rect x="2580.1" y="1934.44" width="4.1" height="4.04" fill="#ffffff" /><rect x="2580.1" y="1942.52" width="4.1" height="4.04" fill="#ffffff" /><rect x="2584.2" y="1930.4" width="4.1" height="4.04" fill="#ffffff" /><rect x="2584.2" y="1938.48" width="4.1" height="4.04" fill="#ffffff" /><rect x="2584.2" y="1946.56" width="4.1" height="4.04" fill="#ffffff" /><rect x="2588.3" y="1934.44" width="4.1" height="4.04" fill="#ffffff" /><rect x="2588.3" y="1942.52" width="4.1" height="4.04" fill="#ffffff" /><rect x="2592.4" y="1930.4" width="4.1" height="4.04" fill="#ffffff" /><rect x="2592.4" y="1938.48" width="4.1" height="4.04" fill="#ffffff" /><rect x="2592.4" y="1946.56" width="4.1" height="4.04" fill="#ffffff" />
<rect x="2610" y="1920" width="40" height="40.3" fill="#6a8cbd" />
<path d="M2621.5 1925H2617.5V1950.5H2621.5M2634.5 1925H2638.5V1937" stroke="#e6e6e6" stroke-width="2" fill="none" /><rect x="2623.3" y="1928.8" width="9.6" height="6.6" fill="#7f9fca" /><rect x="2623.3" y="1928.8" width="9.6" height="6.6" stroke="#e6e6e6" stroke-width="1.2" fill="none" /><circle cx="2628" cy="1943.6" r="4.6" stroke="#e6e6e6" stroke-width="1.6" fill="#7f9fca" /><path d="M2634.5 1938.5V1956L2639 1951.7H2646Z" fill="#f4f4f4" stroke="#6a8cbd" stroke-width="1"/>
<path d="M2681.6 1929.2L2659.5 1950.8H2690" stroke="#e6e6e6" stroke-width="2.4" fill="none" /><rect x="2669.2" y="1936.4" width="5" height="5" fill="#e6e6e6"/>
<path d="M2714 1929.6H2733V1954.2H2707.2V1936" stroke="#e6e6e6" stroke-width="2.2" fill="none" /><rect x="2703" y="1925.3" width="7.6" height="7.6" stroke="#f0b27a" stroke-width="2" fill="none" />
<rect x="2742" y="1920" width="40" height="40.3" fill="#6a8cbd" />
<g transform="translate(2760.8,1940.2) scale(1)"><path d="M0 -16L1.2 -14.6L6.2 -2.2Q3.6 -0.6 4.8 1.6L14.6 15.9L3 9.2A3.1 3.1 0 0 0 -3 9.2L-14.6 15.9L-4.8 1.6Q-3.6 -0.6 -6.2 -2.2L-1.2 -14.6Z" fill="#ffffff"/></g><circle cx="2772.3" cy="1932.4" r="7.4" stroke="#6a8cbd" stroke-width="0" fill="#6a8cbd" /><circle cx="2772.3" cy="1932.4" r="5.9" stroke="#ffffff" stroke-width="0" fill="#ffffff" />
<g transform="translate(2803.8,1940.2) scale(1)"><path d="M0 -16L1.2 -14.6L6.2 -2.2Q3.6 -0.6 4.8 1.6L14.6 15.9L3 9.2A3.1 3.1 0 0 0 -3 9.2L-14.6 15.9L-4.8 1.6Q-3.6 -0.6 -6.2 -2.2L-1.2 -14.6Z" fill="#dcdcdc"/></g><path transform="translate(2810.4,1923.2) rotate(16 6 8) scale(1.12,1.02)" d="M7.5 0L0 9H4.8L2.5 16L11 6.2H6L9 0Z" fill="#f9d67a"/>
<g transform="translate(2850,1940.2) scale(1)"><path d="M0 -16L1.2 -14.6L6.2 -2.2Q3.6 -0.6 4.8 1.6L14.6 15.9L3 9.2A3.1 3.1 0 0 0 -3 9.2L-14.6 15.9L-4.8 1.6Q-3.6 -0.6 -6.2 -2.2L-1.2 -14.6Z" fill="#dcdcdc"/></g>
<text x="2870.2" y="1948.2" font-family="'Liberation Sans',sans-serif" font-size="22.4" font-weight="400" fill="#c4c4c4" text-anchor="start" stroke="#c4c4c4" stroke-width="0.6" textLength="24" lengthAdjust="spacingAndGlyphs">1:1</text>
<path d="M2905 1936.6H2916L2910.5 1943.2Z" fill="#c9c9c9"/>
<rect x="2935.3" y="1925.6" width="11.4" height="11.4" stroke="#e6e6e6" stroke-width="2" fill="none" /><circle cx="2959" cy="1937.2" r="5.8" stroke="#e6e6e6" stroke-width="2" fill="none" /><path d="M2939.8 1954.3H2953.2L2946.5 1944.4Z" stroke="#e6e6e6" stroke-width="2" fill="none" stroke-linejoin="miter"/>
<g transform="translate(2994,1940.1)" fill="#dcdcdc"><rect x="-2.9" y="-15.2" width="5.8" height="8" transform="rotate(0)"/><rect x="-2.9" y="-15.2" width="5.8" height="8" transform="rotate(45)"/><rect x="-2.9" y="-15.2" width="5.8" height="8" transform="rotate(90)"/><rect x="-2.9" y="-15.2" width="5.8" height="8" transform="rotate(135)"/><rect x="-2.9" y="-15.2" width="5.8" height="8" transform="rotate(180)"/><rect x="-2.9" y="-15.2" width="5.8" height="8" transform="rotate(225)"/><rect x="-2.9" y="-15.2" width="5.8" height="8" transform="rotate(270)"/><rect x="-2.9" y="-15.2" width="5.8" height="8" transform="rotate(315)"/><circle r="10.7"/><circle r="5" fill="#3b4354"/></g>
</svg>
</body></html>
